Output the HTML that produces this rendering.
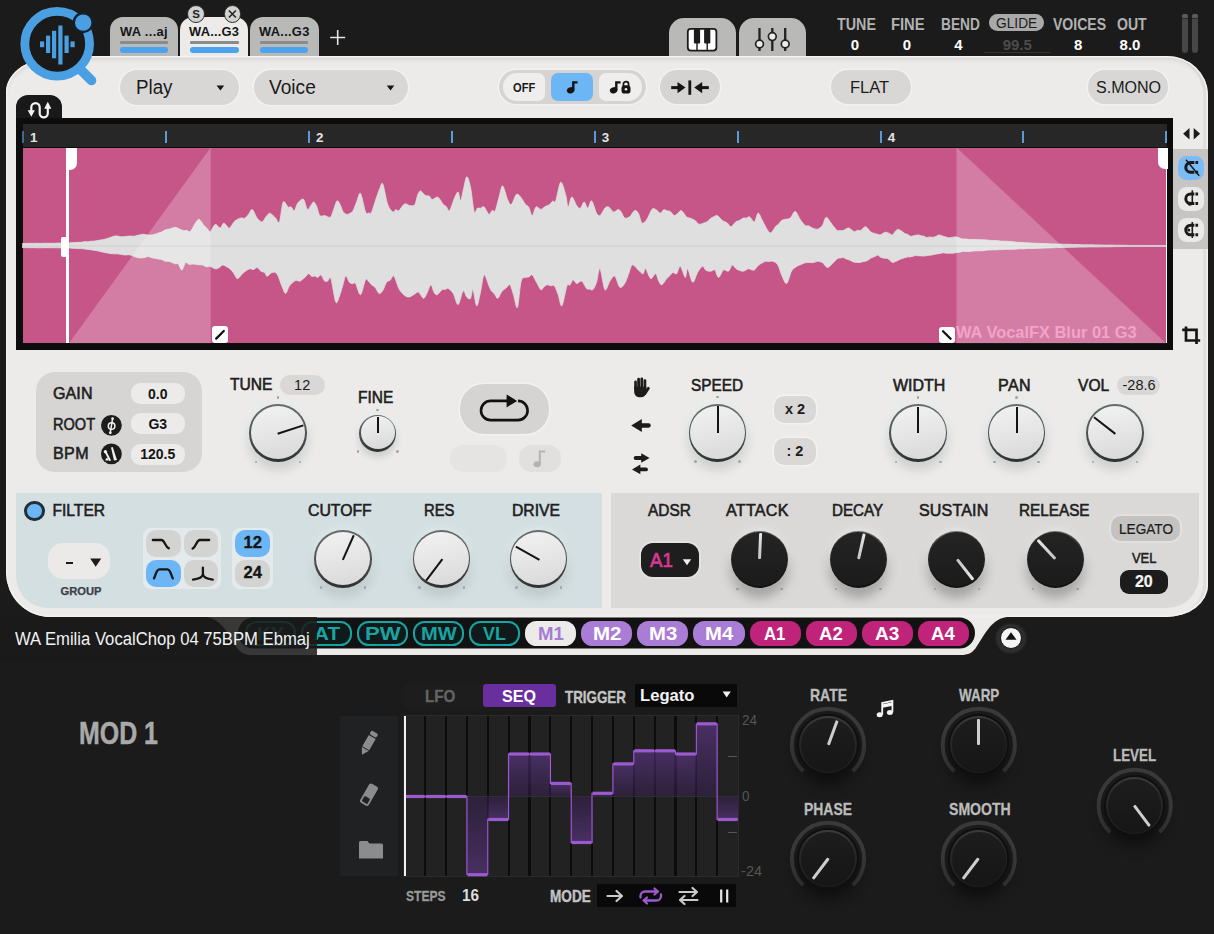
<!DOCTYPE html>
<html><head><meta charset="utf-8"><title>Sampler</title>
<style>
html,body{margin:0;padding:0;}
body{width:1214px;height:934px;background:#1b1b1b;position:relative;overflow:hidden;font-family:"Liberation Sans",sans-serif;}
.t{position:absolute;white-space:nowrap;transform-origin:0 50%;display:block;}
.b{position:absolute;box-sizing:border-box;}
svg{position:absolute;overflow:visible;}
</style></head><body>
<div class="b" style="left:109.6px;top:17.0px;width:68.4px;height:41.0px;background:#b9b9b8;border-radius:0px;border-radius:13px 13px 0 0;"></div>
<span class="t" style="left:120.3px;top:25.8px;font-size:12.5px;line-height:12.5px;font-weight:700;color:#161616;transform:scaleX(1.030);letter-spacing:0.33px;">WA ...aj</span>
<div class="b" style="left:120.3px;top:41.2px;width:48.2px;height:2.6px;background:#8b8b8b;border-radius:1px;"></div>
<div class="b" style="left:120.3px;top:46.7px;width:48.2px;height:6.8px;background:#4aa3ec;border-radius:3.4px;"></div>
<div class="b" style="left:180.0px;top:17.0px;width:67.8px;height:41.0px;background:#ecebe9;border-radius:0px;border-radius:13px 13px 0 0;"></div>
<span class="t" style="left:188.9px;top:25.8px;font-size:12.5px;line-height:12.5px;font-weight:700;color:#161616;transform:scaleX(1.030);letter-spacing:0.20px;">WA...G3</span>
<div class="b" style="left:190.0px;top:41.2px;width:48.5px;height:2.6px;background:#8b8b8b;border-radius:1px;"></div>
<div class="b" style="left:190.0px;top:46.7px;width:48.5px;height:6.8px;background:#4aa3ec;border-radius:3.4px;"></div>
<div class="b" style="left:250.0px;top:17.0px;width:68.5px;height:41.0px;background:#b9b9b8;border-radius:0px;border-radius:13px 13px 0 0;"></div>
<span class="t" style="left:258.5px;top:25.8px;font-size:12.5px;line-height:12.5px;font-weight:700;color:#161616;transform:scaleX(1.030);letter-spacing:0.27px;">WA...G3</span>
<div class="b" style="left:259.5px;top:41.2px;width:48.5px;height:2.6px;background:#8b8b8b;border-radius:1px;"></div>
<div class="b" style="left:259.5px;top:46.7px;width:48.5px;height:6.8px;background:#4aa3ec;border-radius:3.4px;"></div>
<div class="b" style="left:187.2px;top:5.2px;width:17.6px;height:17.6px;background:#d2d2d1;border-radius:9px;border:1.3px solid #2a2a2a;"></div>
<div class="b" style="left:223.6px;top:5.2px;width:17.6px;height:17.6px;background:#d2d2d1;border-radius:9px;border:1.3px solid #2a2a2a;"></div>
<span class="t" style="left:192.2px;top:8.6px;font-size:11.5px;line-height:11.5px;font-weight:700;color:#222;transform:scaleX(1.000);">S</span>
<svg style="left:0;top:0" width="400" height="60"><path d="M228.9 10.5l7 7m0-7l-7 7" stroke="#222" stroke-width="1.5" fill="none"/><path d="M330.2 37.5h15M337.7 30v15" stroke="#e4e4e4" stroke-width="1.6" fill="none"/></svg>
<div class="b" style="left:669.3px;top:17.8px;width:67.2px;height:40.2px;background:#b9b9b8;border-radius:0px;border-radius:15px 15px 0 0;"></div>
<div class="b" style="left:739.0px;top:17.8px;width:67.0px;height:40.2px;background:#b9b9b8;border-radius:0px;border-radius:15px 15px 0 0;"></div>
<svg style="left:0;top:0" width="1214" height="60"><rect x="687.8" y="28.8" width="28.6" height="21.8" rx="3" fill="#fff" stroke="#1c1c1c" stroke-width="1.8"/><path d="M697 43v7M707.2 43v7" stroke="#1c1c1c" stroke-width="1.4"/><rect x="693.9" y="29" width="6.2" height="14.4" rx="1" fill="#1c1c1c"/><rect x="704.1" y="29" width="6.2" height="14.4" rx="1" fill="#1c1c1c"/><path d="M759.5 28v23M772.3 28v23M785.2 28v23" stroke="#222" stroke-width="2.3"/><circle cx="759.5" cy="44" r="3.9" fill="#ececec" stroke="#222" stroke-width="1.7"/><circle cx="772.3" cy="36.6" r="3.9" fill="#ececec" stroke="#222" stroke-width="1.7"/><circle cx="785.2" cy="44" r="3.9" fill="#ececec" stroke="#222" stroke-width="1.7"/></svg>
<span class="t" style="left:837.0px;top:16.6px;font-size:15.6px;line-height:15.6px;font-weight:700;color:#b2b2b2;transform:scaleX(0.918);">TUNE</span>
<span class="t" style="left:891.4px;top:16.6px;font-size:15.6px;line-height:15.6px;font-weight:700;color:#b2b2b2;transform:scaleX(0.946);">FINE</span>
<span class="t" style="left:940.7px;top:16.6px;font-size:15.6px;line-height:15.6px;font-weight:700;color:#b2b2b2;transform:scaleX(0.878);">BEND</span>
<div class="b" style="left:989.4px;top:14.3px;width:54.8px;height:16.6px;background:#a9a9a9;border-radius:8.3px;"></div>
<span class="t" style="left:995.5px;top:14.7px;font-size:15.4px;line-height:15.4px;font-weight:400;color:#1d1d1d;transform:scaleX(0.894);">GLIDE</span>
<span class="t" style="left:1053.1px;top:16.6px;font-size:15.6px;line-height:15.6px;font-weight:700;color:#b2b2b2;transform:scaleX(0.901);">VOICES</span>
<span class="t" style="left:1116.6px;top:16.6px;font-size:15.6px;line-height:15.6px;font-weight:700;color:#b2b2b2;transform:scaleX(0.902);">OUT</span>
<span class="t" style="left:850.8px;top:37.0px;font-size:15px;line-height:15px;font-weight:700;color:#fff;transform:scaleX(1.000);">0</span>
<span class="t" style="left:902.8px;top:37.0px;font-size:15px;line-height:15px;font-weight:700;color:#fff;transform:scaleX(1.000);">0</span>
<span class="t" style="left:954.3px;top:37.0px;font-size:15px;line-height:15px;font-weight:700;color:#fff;transform:scaleX(1.000);">4</span>
<span class="t" style="left:1002.7px;top:37.0px;font-size:15px;line-height:15px;font-weight:700;color:#4c4c4c;transform:scaleX(1.000);">99.5</span>
<span class="t" style="left:1074.1px;top:37.0px;font-size:15px;line-height:15px;font-weight:700;color:#fff;transform:scaleX(1.000);">8</span>
<span class="t" style="left:1119.6px;top:37.0px;font-size:15px;line-height:15px;font-weight:700;color:#fff;transform:scaleX(1.000);">8.0</span>
<div class="b" style="left:984.0px;top:52.0px;width:66.0px;height:1.3px;background:#333;border-radius:0px;"></div>
<div class="b" style="left:1181.6px;top:13.6px;width:6.2px;height:39.4px;background:#474747;border-radius:3px;"></div>
<div class="b" style="left:1181.6px;top:13.6px;width:6.2px;height:4.0px;background:#5c5c5c;border-radius:2px;"></div>
<div class="b" style="left:1181.6px;top:17.6px;width:6.2px;height:1.6px;background:#2a2a2a;border-radius:0px;"></div>
<div class="b" style="left:1192.0px;top:13.6px;width:6.2px;height:39.4px;background:#474747;border-radius:3px;"></div>
<div class="b" style="left:1192.0px;top:13.6px;width:6.2px;height:4.0px;background:#5c5c5c;border-radius:2px;"></div>
<div class="b" style="left:1192.0px;top:17.6px;width:6.2px;height:1.6px;background:#2a2a2a;border-radius:0px;"></div>
<div class="b" id="panel" style="left:6px;top:55.7px;width:1202px;height:561.3px;background:#ecebe9;border-radius:54px 41px 42px 44px / 36px 39px 32px 45px;overflow:hidden;box-shadow:inset 0 0 0 1.5px #f3f2f0,inset 0 5px 5px -2px rgba(60,50,40,0.13),inset -6px 0 0 -1px rgba(0,0,0,0.045);">
</div>
<svg style="left:0;top:0" width="130" height="100" viewBox="0 0 130 100">
<line x1="80" y1="69" x2="91.5" y2="80.5" stroke="#4a9fe3" stroke-width="9.6" stroke-linecap="round"/>
<circle cx="57.2" cy="43.8" r="32.4" fill="#1a1a1a" stroke="#4a9fe3" stroke-width="8.8"/>
<circle cx="83.2" cy="22.6" r="9.4" fill="#4a9fe3" stroke="#15202b" stroke-width="2.4"/>
<rect x="40.0" y="41.4" width="4.2" height="5.8" fill="#4a9fe3"/>
<rect x="46.0" y="35.6" width="4.2" height="17.4" fill="#4a9fe3"/>
<rect x="52.0" y="30.8" width="4.2" height="27.5" fill="#4a9fe3"/>
<rect x="58.3" y="25.5" width="4.2" height="39.0" fill="#4a9fe3"/>
<rect x="64.5" y="35.6" width="4.2" height="17.4" fill="#4a9fe3"/>
<rect x="70.5" y="41.4" width="4.2" height="5.8" fill="#4a9fe3"/>
</svg>
<div class="b" style="left:119.6px;top:70.4px;width:119.0px;height:34.5px;background:#d8d7d6;border-radius:17.3px;box-shadow:0 0 0 1.5px rgba(255,255,255,0.38);"></div>
<span class="t" style="left:135.8px;top:77.7px;font-size:19.5px;line-height:19.5px;font-weight:400;color:#1b1b1b;transform:scaleX(0.962);">Play</span>
<div class="b" style="left:253.5px;top:70.4px;width:154.5px;height:34.5px;background:#d8d7d6;border-radius:17.3px;box-shadow:0 0 0 1.5px rgba(255,255,255,0.38);"></div>
<span class="t" style="left:268.9px;top:77.7px;font-size:19.5px;line-height:19.5px;font-weight:400;color:#1b1b1b;transform:scaleX(0.981);">Voice</span>
<svg style="left:0;top:0" width="1214" height="130"><path d="M216.6 85.6h7.6l-3.8 5z M386.7 85.6h7.6l-3.8 5z" fill="#151515"/></svg>
<div class="b" style="left:499.0px;top:70.2px;width:146.6px;height:34.1px;background:#d5d4d3;border-radius:17px;box-shadow:0 0 0 1.5px rgba(255,255,255,0.38);"></div>
<div class="b" style="left:502.5px;top:73.4px;width:42.9px;height:27.8px;background:#efeeec;border-radius:0px;border-radius:14px 7px 7px 14px;"></div>
<div class="b" style="left:551.0px;top:73.4px;width:42.2px;height:27.8px;background:#6cb6f5;border-radius:7px;"></div>
<div class="b" style="left:599.0px;top:73.4px;width:43.2px;height:27.8px;background:#efeeec;border-radius:0px;border-radius:7px 14px 14px 7px;"></div>
<span class="t" style="left:513.0px;top:81.6px;font-size:12px;line-height:12px;font-weight:700;color:#1b1b1b;transform:scaleX(0.929);">OFF</span>
<svg style="left:0;top:0" width="1214" height="130"><ellipse cx="570.600" cy="90.300" rx="3.800" ry="3.100" fill="#151515" transform="rotate(-20 570.600 90.300)"/><path d="M573.300 90.300V82.400h4.300" stroke="#151515" stroke-width="2.400" fill="none"/><ellipse cx="613.600" cy="90.300" rx="3.800" ry="3.100" fill="#151515" transform="rotate(-20 613.600 90.300)"/><path d="M616.300 90.300V82.400h4.300" stroke="#151515" stroke-width="2.400" fill="none"/><rect x="621.500" y="85.300" width="9" height="8.300" rx="3.200" fill="#151515"/><path d="M623.400 86v-1.700a2.600 2.600 0 0 1 5.200 0v1.700" stroke="#151515" stroke-width="1.700" fill="none"/><circle cx="626" cy="89.300" r="1.300" fill="#efeeec"/></svg>
<div class="b" style="left:660.0px;top:70.2px;width:59.5px;height:34.1px;background:#d5d4d3;border-radius:17px;box-shadow:0 0 0 1.5px rgba(255,255,255,0.38);"></div>
<svg style="left:0;top:0" width="1214" height="130"><path d="M671.2 87.6h8" stroke="#151515" stroke-width="3"/><path d="M677.5 82l8 5.600-8 5.600z" fill="#151515"/><path d="M689.8 80.400v14.400" stroke="#151515" stroke-width="2.800"/><path d="M708.800 87.600h-8" stroke="#151515" stroke-width="3"/><path d="M702.200 82l-8 5.600 8 5.600z" fill="#151515"/></svg>
<div class="b" style="left:830.5px;top:70.2px;width:80.5px;height:34.1px;background:#d8d7d6;border-radius:17px;box-shadow:0 0 0 1.5px rgba(255,255,255,0.38);"></div>
<span class="t" style="left:850.2px;top:80.0px;font-size:16px;line-height:16px;font-weight:400;color:#1b1b1b;transform:scaleX(1.028);">FLAT</span>
<div class="b" style="left:1088.4px;top:70.2px;width:79.6px;height:33.4px;background:#d8d7d6;border-radius:16.7px;box-shadow:0 0 0 1.5px rgba(255,255,255,0.38);"></div>
<span class="t" style="left:1095.5px;top:80.0px;font-size:16px;line-height:16px;font-weight:400;color:#1b1b1b;transform:scaleX(1.003);">S.MONO</span>
<div class="b" style="left:16.4px;top:94.9px;width:46.0px;height:30.1px;background:#191919;border-radius:0px;border-radius:12px 12px 0 0;"></div>
<div class="b" style="left:16.0px;top:117.5px;width:1157.0px;height:232.0px;background:#0d0d0d;border-radius:0px;"></div>
<div class="b" style="left:22.6px;top:124.3px;width:1144.8px;height:23.2px;background:#272727;border-radius:0px;"></div>
<div class="b" style="left:22.6px;top:147.5px;width:1144.9px;height:195.8px;background:#c75688;border-radius:0px;"></div>
<svg style="left:0;top:0" width="100" height="130"><path d="M31.300 111V107.300a4.200 4.200 0 0 1 8.400 0V113.300a4.050 4.050 0 0 0 8.100 0V108" stroke="#f4f4f4" stroke-width="2.200" fill="none"/><path d="M27.700 110.300h7.200l-3.600 6.500z M44.200 108.800h7.200l-3.600-7z" fill="#f4f4f4"/></svg>
<div class="b" style="left:21.8px;top:131.0px;width:2.0px;height:11.8px;background:#3f6a94;border-radius:0px;"></div>
<span class="t" style="left:30.0px;top:131.6px;font-size:13.4px;line-height:12px;font-weight:700;color:#e4e4e4;">1</span>
<div class="b" style="left:164.8px;top:131.0px;width:2.0px;height:11.8px;background:#5b9bd5;border-radius:0px;"></div>
<div class="b" style="left:307.7px;top:131.0px;width:2.0px;height:11.8px;background:#5b9bd5;border-radius:0px;"></div>
<span class="t" style="left:315.9px;top:131.6px;font-size:13.4px;line-height:12px;font-weight:700;color:#e4e4e4;">2</span>
<div class="b" style="left:450.6px;top:131.0px;width:2.0px;height:11.8px;background:#5b9bd5;border-radius:0px;"></div>
<div class="b" style="left:593.6px;top:131.0px;width:2.0px;height:11.8px;background:#5b9bd5;border-radius:0px;"></div>
<span class="t" style="left:601.8px;top:131.6px;font-size:13.4px;line-height:12px;font-weight:700;color:#e4e4e4;">3</span>
<div class="b" style="left:736.5px;top:131.0px;width:2.0px;height:11.8px;background:#5b9bd5;border-radius:0px;"></div>
<div class="b" style="left:879.5px;top:131.0px;width:2.0px;height:11.8px;background:#5b9bd5;border-radius:0px;"></div>
<span class="t" style="left:887.7px;top:131.6px;font-size:13.4px;line-height:12px;font-weight:700;color:#e4e4e4;">4</span>
<div class="b" style="left:1022.4px;top:131.0px;width:2.0px;height:11.8px;background:#5b9bd5;border-radius:0px;"></div>
<div class="b" style="left:1165.4px;top:131.0px;width:1.3px;height:11.8px;background:#5b9bd5;border-radius:0px;"></div>
<svg style="left:0;top:0" width="1214" height="360"><path d="M22.6 244.1C22.6 244.0 22.1 243.5 22.5 243.4C22.9 243.3 24.3 243.4 25.1 243.4C25.9 243.4 26.9 243.4 27.7 243.4C28.5 243.4 29.5 243.3 30.3 243.3C31.2 243.3 32.1 243.4 32.9 243.4C33.8 243.4 34.7 243.3 35.6 243.3C36.4 243.2 37.3 243.3 38.2 243.3C39.0 243.3 39.9 243.4 40.8 243.4C41.6 243.4 42.6 243.2 43.4 243.2C44.2 243.2 45.2 243.3 46.0 243.3C46.9 243.3 47.8 243.2 48.6 243.2C49.5 243.2 50.4 243.3 51.3 243.3C52.1 243.3 53.0 243.3 53.9 243.3C54.7 243.3 55.6 243.2 56.5 243.2C57.3 243.1 58.3 243.0 59.1 243.0C59.9 243.1 60.9 243.2 61.7 243.2C62.6 243.3 63.5 243.2 64.3 243.2C65.2 243.2 66.1 243.2 66.9 243.1C67.8 243.1 69.0 243.0 69.9 242.9C70.9 242.8 71.9 242.6 72.9 242.6C73.8 242.5 74.9 242.5 75.8 242.5C76.8 242.4 77.9 242.4 78.8 242.3C79.8 242.3 80.8 242.3 81.8 242.2C82.7 242.0 83.9 241.7 84.9 241.6C85.9 241.6 87.0 241.9 88.0 241.8C88.9 241.7 90.1 241.3 91.0 241.2C92.0 241.1 93.1 241.3 94.1 241.2C95.1 241.1 96.2 240.8 97.2 240.6C98.2 240.4 99.3 240.2 100.3 240.1C101.3 239.9 102.4 239.7 103.4 239.5C104.4 239.2 105.4 239.0 106.5 238.7C107.6 238.4 109.0 237.9 110.2 237.5C111.4 237.1 112.8 236.5 113.9 236.2C115.0 236.0 116.1 235.9 117.2 235.9C118.2 236.0 119.4 236.6 120.5 236.7C121.5 236.8 122.7 236.8 123.8 236.7C124.8 236.7 126.0 236.4 127.1 236.3C128.1 236.2 129.3 236.1 130.4 236.1C131.4 236.1 132.6 236.3 133.7 236.2C134.7 236.1 135.9 235.8 137.0 235.5C138.0 235.3 139.2 234.9 140.3 234.7C141.3 234.5 142.4 234.2 143.5 234.2C144.7 234.3 146.1 234.8 147.3 234.9C148.4 235.1 149.8 235.1 151.0 235.0C152.1 234.9 153.5 234.7 154.7 234.3C155.9 234.0 157.3 233.4 158.4 233.0C159.5 232.6 160.6 232.5 161.7 232.0C162.7 231.5 163.9 230.5 165.0 230.0C166.0 229.6 167.1 229.6 168.3 229.3C169.4 229.0 170.8 228.5 172.0 228.2C173.2 227.9 174.5 227.2 175.7 227.3C176.9 227.5 178.2 228.5 179.4 229.0C180.6 229.5 181.9 230.3 183.1 230.5C184.3 230.8 185.6 230.4 186.8 230.6C188.0 230.7 189.1 232.5 190.5 231.3C191.9 230.1 194.1 225.0 195.4 223.1C196.8 221.2 197.8 219.0 199.1 219.4C200.5 219.8 202.8 224.1 204.1 225.6C205.4 227.1 206.2 227.5 207.2 228.5C208.2 229.5 209.0 232.4 210.3 231.8C211.5 231.1 213.6 225.0 215.2 224.4C216.8 223.8 218.8 228.3 220.1 228.1C221.5 227.9 222.5 223.1 223.9 223.1C225.2 223.1 227.5 227.7 228.8 228.1C230.0 228.4 230.8 226.4 231.7 225.3C232.6 224.2 233.6 222.2 234.6 221.2C235.5 220.3 236.4 220.0 237.4 219.4C238.5 218.9 240.0 218.1 241.2 217.9C242.3 217.7 243.7 218.8 244.9 218.2C246.0 217.6 247.4 215.6 248.6 214.2C249.8 212.8 250.9 208.9 252.3 209.5C253.7 210.2 255.6 216.2 257.2 218.2C258.8 220.2 260.8 222.1 262.2 221.9C263.5 221.7 264.7 218.3 265.9 216.9C267.0 215.5 268.5 213.5 269.6 213.2C270.7 213.0 271.7 214.4 272.7 215.2C273.6 216.0 274.7 217.1 275.7 218.2C276.8 219.3 278.3 224.5 279.5 221.9C280.6 219.3 281.8 204.5 283.2 202.1C284.5 199.8 286.8 206.3 288.1 207.1C289.4 207.8 290.2 206.4 291.2 207.0C292.2 207.6 293.3 211.2 294.3 210.8C295.2 210.3 296.2 205.8 297.1 204.2C298.1 202.6 298.9 201.5 300.0 200.8C301.1 200.0 302.5 198.2 303.7 199.5C304.9 200.9 306.3 208.4 307.4 209.4C308.5 210.4 309.5 207.1 310.5 206.0C311.5 204.8 312.6 201.9 313.6 202.0C314.6 202.1 315.7 204.3 316.7 206.5C317.7 208.6 318.5 214.1 319.8 215.6C321.1 217.1 323.4 215.4 324.7 215.6C326.0 215.8 326.8 216.7 327.8 216.9C328.8 217.1 329.9 218.2 330.9 216.8C331.9 215.5 333.0 211.1 334.0 208.5C335.0 206.0 336.1 201.4 337.1 200.8C338.1 200.2 339.2 202.9 340.2 204.7C341.1 206.5 342.2 210.3 343.2 211.9C344.3 213.4 345.9 214.2 346.9 214.4C348.0 214.6 349.0 213.8 350.0 213.2C351.0 212.6 352.0 212.5 353.1 210.7C354.2 208.8 355.6 204.2 356.8 201.4C358.0 198.6 359.2 191.7 360.5 193.4C361.9 195.0 364.2 208.8 365.5 211.9C366.8 215.0 367.6 213.0 368.6 213.0C369.6 213.0 370.4 214.4 371.7 211.9C372.9 209.3 375.3 200.8 376.6 197.1C377.9 193.4 378.7 190.8 379.7 188.8C380.7 186.7 381.5 181.5 382.8 184.0C384.1 186.5 386.1 200.0 387.7 204.5C389.3 208.9 391.4 211.0 392.7 211.9C393.9 212.7 394.8 210.0 395.7 209.8C396.7 209.6 397.6 211.5 398.8 210.7C400.1 209.8 402.5 205.5 403.8 204.5C405.1 203.4 405.9 204.0 406.9 204.2C407.9 204.4 408.7 205.7 410.0 205.7C411.2 205.8 413.7 206.2 414.9 204.5C416.1 202.8 416.7 197.3 417.6 195.1C418.5 193.0 419.4 191.1 420.3 190.9C421.2 190.6 422.3 192.8 423.2 193.5C424.1 194.3 425.1 195.4 426.0 195.8C427.0 196.2 428.1 195.4 429.1 196.0C430.1 196.6 430.9 199.4 432.2 199.5C433.5 199.7 435.9 197.0 437.1 197.1C438.4 197.1 439.2 198.5 440.2 199.7C441.2 200.9 442.3 203.4 443.3 204.5C444.3 205.6 445.4 205.7 446.4 206.7C447.4 207.7 448.2 212.0 449.5 210.7C450.8 209.3 453.1 201.3 454.4 198.3C455.8 195.3 457.2 191.7 458.1 192.1C459.1 192.5 459.7 201.4 460.6 200.8C461.5 200.1 462.7 192.0 463.7 188.2C464.7 184.3 465.7 177.0 466.8 176.8C467.9 176.6 469.3 181.6 470.5 187.2C471.7 192.8 473.1 208.5 474.2 211.9C475.3 215.3 476.3 208.9 477.3 208.3C478.3 207.7 479.3 208.4 480.4 208.2C481.5 208.0 482.7 206.0 484.1 206.9C485.5 207.9 487.7 213.8 489.0 214.4C490.3 214.9 491.1 211.1 492.1 210.5C493.1 209.9 494.1 212.7 495.2 210.7C496.3 208.6 497.7 201.7 498.9 197.7C500.1 193.8 501.2 185.7 502.6 185.9C504.0 186.2 506.2 196.6 507.6 199.5C508.9 202.5 509.9 205.3 511.3 204.5C512.7 203.7 514.9 196.0 516.2 194.6C517.5 193.2 518.3 194.7 519.3 195.5C520.3 196.3 521.4 198.1 522.4 199.5C523.4 201.0 524.5 203.3 525.5 204.5C526.5 205.7 527.5 205.2 528.6 206.9C529.7 208.7 531.1 215.6 532.3 215.6C533.5 215.6 534.6 207.9 536.0 206.9C537.4 206.0 539.5 209.4 540.9 209.4C542.3 209.4 543.2 207.7 544.6 206.9C546.0 206.2 548.3 205.4 549.6 204.5C550.9 203.5 551.7 201.7 552.7 201.1C553.6 200.5 554.5 203.8 555.7 200.8C557.0 197.8 559.1 183.2 560.7 182.2C562.3 181.3 564.4 190.6 565.6 194.6C566.8 198.5 567.1 206.6 568.1 206.9C569.1 207.3 570.4 197.3 571.8 197.1C573.2 196.9 575.4 203.9 576.7 205.7C578.1 207.5 579.3 208.8 580.5 208.2C581.6 207.6 583.0 202.0 584.2 202.0C585.3 202.0 586.7 208.4 587.9 208.2C589.1 208.0 590.2 200.0 591.6 200.8C593.0 201.6 595.2 210.8 596.5 213.1C597.9 215.5 598.7 216.4 600.0 215.6C601.3 214.8 603.6 209.6 604.9 208.2C606.3 206.8 607.3 206.4 608.6 206.9C610.0 207.5 612.0 211.5 613.6 211.9C615.2 212.3 617.2 209.3 618.5 209.4C619.8 209.6 620.6 211.4 621.6 212.8C622.6 214.2 623.4 217.4 624.7 218.1C626.0 218.7 628.1 218.0 629.7 216.8C631.2 215.6 633.2 211.2 634.6 210.7C636.0 210.1 637.1 211.1 638.3 213.1C639.5 215.1 640.6 222.0 642.0 223.0C643.4 224.0 645.4 221.5 646.9 219.3C648.5 217.1 650.5 211.0 651.9 209.4C653.3 207.8 654.2 208.8 655.6 209.4C657.0 210.0 659.3 213.1 660.5 213.1C661.8 213.2 662.6 210.1 663.6 209.7C664.6 209.3 665.6 210.4 666.7 210.7C667.8 211.0 669.2 210.8 670.4 211.6C671.6 212.4 672.9 215.3 674.1 215.6C675.3 215.9 676.6 214.1 677.8 213.3C679.0 212.6 680.2 210.1 681.5 210.7C682.9 211.2 685.2 215.7 686.5 216.8C687.8 218.0 688.6 217.6 689.6 218.0C690.6 218.4 691.7 218.8 692.7 219.3C693.6 219.8 694.8 220.2 695.7 221.0C696.7 221.8 697.6 223.9 698.8 224.2C700.1 224.6 702.4 223.5 703.8 223.0C705.2 222.5 706.3 222.2 707.5 221.4C708.7 220.6 710.1 218.8 711.2 218.1C712.3 217.3 713.3 216.9 714.3 216.5C715.3 216.1 716.1 215.0 717.4 215.6C718.7 216.2 720.7 219.4 722.3 220.5C723.9 221.7 725.9 222.0 727.3 223.0C728.6 224.0 729.6 226.9 731.0 226.7C732.3 226.5 734.5 222.8 735.9 221.8C737.3 220.8 738.4 221.0 739.6 220.4C740.8 219.8 742.2 218.4 743.3 218.1C744.4 217.7 745.4 218.3 746.4 218.1C747.4 217.9 748.2 216.2 749.5 216.8C750.8 217.4 753.1 222.4 754.4 221.8C755.8 221.2 757.0 213.5 758.1 213.1C759.3 212.7 760.7 217.1 761.8 219.3C763.0 221.5 764.2 224.5 765.6 226.7C766.9 228.9 768.9 232.9 770.5 232.9C772.1 232.9 774.2 228.1 775.4 226.7C776.7 225.3 777.5 225.3 778.5 224.3C779.5 223.3 780.5 221.3 781.6 220.5C782.7 219.7 783.9 219.7 785.3 219.3C786.7 218.9 788.7 219.3 790.3 218.1C791.8 216.8 793.6 211.2 795.2 211.4C796.8 211.6 798.6 217.0 800.1 219.3C801.7 221.6 803.7 224.4 805.1 225.5C806.5 226.5 807.6 225.5 808.8 225.9C810.0 226.3 811.1 227.4 812.5 228.0C813.9 228.5 815.9 229.6 817.4 229.2C819.0 228.8 821.0 227.4 822.4 225.5C823.8 223.6 824.7 217.7 826.1 217.3C827.5 216.9 829.8 221.4 831.0 223.0C832.3 224.6 833.1 226.0 834.1 227.1C835.1 228.3 836.2 229.9 837.2 230.4C838.2 231.0 839.3 230.6 840.3 230.6C841.3 230.6 842.1 230.8 843.4 230.4C844.7 230.0 847.0 228.1 848.3 228.0C849.6 227.8 850.4 229.1 851.4 229.7C852.4 230.3 853.5 231.6 854.5 231.7C855.5 231.7 856.6 230.5 857.6 230.3C858.6 230.1 859.4 231.0 860.7 230.4C862.0 229.9 864.0 226.5 865.6 226.7C867.2 226.9 869.3 230.6 870.6 231.7C871.9 232.7 872.7 232.9 873.7 233.2C874.6 233.6 875.7 233.9 876.7 234.1C877.8 234.4 879.0 235.0 880.0 234.9C881.0 234.8 881.9 233.9 882.8 233.4C883.6 233.0 884.5 232.2 885.5 232.2C886.5 232.1 887.8 232.8 888.9 233.3C890.0 233.7 891.4 235.2 892.4 234.9C893.4 234.6 894.3 232.3 895.1 231.4C896.0 230.5 896.9 229.5 897.9 229.4C898.9 229.3 900.2 230.1 901.3 230.8C902.4 231.5 903.8 233.0 904.8 233.5C905.7 234.1 906.6 233.9 907.5 234.3C908.4 234.8 909.4 236.0 910.3 236.3C911.1 236.5 912.1 236.1 913.0 235.9C913.9 235.7 914.9 235.5 915.8 235.3C916.6 235.1 917.6 234.8 918.5 234.9C919.4 235.0 920.4 235.6 921.3 235.8C922.1 236.0 923.1 236.0 924.0 236.3C924.9 236.5 925.9 237.6 926.8 237.7C927.6 237.8 928.6 236.9 929.5 236.9C930.4 236.8 931.4 237.3 932.3 237.3C933.1 237.3 933.9 237.2 935.0 236.8C936.1 236.5 938.0 235.0 939.1 234.9C940.3 234.8 941.3 235.7 942.4 236.0C943.4 236.3 944.5 236.6 945.6 236.9C946.6 237.1 947.7 237.6 948.8 237.7C949.8 237.7 951.1 237.5 952.2 237.4C953.3 237.2 954.6 236.8 955.7 236.8C956.8 236.9 958.0 237.5 959.1 237.8C960.2 238.2 961.5 238.9 962.5 239.0C963.5 239.2 964.4 238.9 965.3 239.0C966.2 239.0 967.2 239.2 968.0 239.3C968.9 239.4 969.9 239.6 970.8 239.6C971.7 239.6 972.7 239.4 973.5 239.4C974.4 239.4 975.4 239.5 976.3 239.6C977.2 239.6 978.2 239.7 979.0 239.7C979.9 239.8 980.9 239.8 981.8 239.8C982.7 239.8 983.7 239.7 984.5 239.7C985.4 239.8 986.4 239.9 987.3 240.1C988.2 240.2 989.2 240.3 990.0 240.4C990.9 240.5 991.9 240.5 992.8 240.5C993.7 240.5 994.7 240.6 995.5 240.6C996.4 240.6 997.4 240.6 998.3 240.7C999.2 240.8 1000.2 241.1 1001.0 241.2C1001.9 241.3 1002.9 241.2 1003.8 241.2C1004.7 241.2 1005.7 241.2 1006.5 241.2C1007.4 241.2 1008.4 241.4 1009.3 241.5C1010.2 241.6 1011.2 241.6 1012.0 241.7C1012.9 241.8 1013.9 241.8 1014.8 241.9C1015.7 242.0 1016.7 242.3 1017.6 242.3C1018.4 242.4 1019.4 242.4 1020.3 242.5C1021.2 242.5 1022.2 242.5 1023.1 242.6C1023.9 242.7 1024.9 242.8 1025.8 242.8C1026.7 242.9 1027.7 242.8 1028.6 242.8C1029.4 242.8 1030.4 243.1 1031.3 243.1C1032.2 243.2 1033.2 243.1 1034.1 243.2C1034.9 243.2 1035.9 243.3 1036.8 243.3C1037.7 243.4 1038.7 243.4 1039.6 243.4C1040.4 243.4 1041.4 243.5 1042.3 243.5C1043.2 243.5 1044.2 243.5 1045.1 243.6C1045.9 243.6 1046.9 243.7 1047.8 243.7C1048.7 243.8 1049.7 243.8 1050.6 243.9C1051.4 243.9 1052.4 243.9 1053.3 243.9C1054.2 243.9 1055.2 244.0 1056.1 244.0C1056.9 244.0 1057.9 244.1 1058.8 244.1C1059.7 244.1 1060.7 244.1 1061.6 244.1C1062.4 244.2 1063.4 244.3 1064.3 244.3C1065.2 244.3 1066.2 244.2 1067.1 244.2C1068.0 244.2 1068.9 244.3 1069.8 244.3C1070.7 244.4 1071.7 244.4 1072.6 244.5C1073.5 244.5 1074.4 244.5 1075.3 244.5C1076.2 244.5 1077.2 244.6 1078.1 244.6C1079.0 244.6 1079.9 244.6 1080.8 244.7C1081.7 244.7 1082.7 244.7 1083.6 244.8C1084.5 244.8 1085.4 244.8 1086.3 244.8C1087.2 244.8 1088.2 244.8 1089.1 244.8C1090.0 244.8 1090.9 244.8 1091.8 244.8C1092.7 244.8 1093.7 244.9 1094.6 244.9C1095.5 244.9 1096.5 244.9 1097.3 244.9C1098.2 245.0 1099.2 245.0 1100.1 245.0C1101.0 245.0 1102.0 245.1 1102.8 245.1C1103.7 245.1 1104.7 245.1 1105.6 245.1C1106.5 245.1 1107.5 245.1 1108.3 245.1C1109.2 245.1 1110.2 245.1 1111.1 245.1C1112.0 245.1 1113.0 245.2 1113.8 245.2C1114.7 245.2 1115.7 245.2 1116.6 245.2C1117.5 245.2 1118.5 245.2 1119.3 245.2C1120.2 245.2 1121.2 245.3 1122.1 245.3C1123.0 245.3 1124.0 245.3 1124.8 245.3C1125.7 245.4 1126.7 245.4 1127.6 245.4C1128.5 245.4 1129.5 245.4 1130.3 245.4C1131.2 245.4 1132.2 245.4 1133.1 245.4C1134.0 245.4 1135.0 245.4 1135.8 245.4C1136.7 245.4 1137.7 245.4 1138.6 245.4C1139.5 245.4 1140.5 245.4 1141.3 245.4C1142.2 245.4 1143.2 245.5 1144.1 245.5C1145.0 245.5 1146.0 245.5 1146.9 245.5C1147.7 245.5 1148.7 245.5 1149.6 245.5C1150.5 245.5 1151.5 245.5 1152.4 245.5C1153.2 245.6 1154.2 245.5 1155.1 245.5C1156.0 245.5 1157.0 245.6 1157.9 245.6C1158.7 245.6 1159.7 245.6 1160.6 245.6C1161.5 245.6 1162.5 245.6 1163.4 245.6C1164.2 245.6 1165.7 245.6 1166.1 245.6L1166.1 246.2C1165.7 246.2 1164.2 246.2 1163.4 246.2C1162.5 246.2 1161.5 246.2 1160.6 246.2C1159.7 246.2 1158.7 246.3 1157.9 246.3C1157.0 246.3 1156.0 246.3 1155.1 246.3C1154.2 246.3 1153.2 246.3 1152.4 246.3C1151.5 246.3 1150.5 246.3 1149.6 246.3C1148.7 246.3 1147.7 246.3 1146.9 246.3C1146.0 246.3 1145.0 246.4 1144.1 246.4C1143.2 246.4 1142.2 246.4 1141.3 246.4C1140.5 246.4 1139.5 246.4 1138.6 246.4C1137.7 246.4 1136.7 246.4 1135.8 246.4C1135.0 246.4 1134.0 246.4 1133.1 246.4C1132.2 246.5 1131.2 246.4 1130.3 246.4C1129.5 246.5 1128.5 246.5 1127.6 246.5C1126.7 246.5 1125.7 246.5 1124.8 246.5C1124.0 246.5 1123.0 246.5 1122.1 246.5C1121.2 246.6 1120.2 246.6 1119.3 246.6C1118.5 246.6 1117.5 246.6 1116.6 246.6C1115.7 246.6 1114.7 246.6 1113.8 246.6C1113.0 246.7 1112.0 246.6 1111.1 246.7C1110.2 246.7 1109.2 246.7 1108.3 246.8C1107.5 246.8 1106.5 246.8 1105.6 246.8C1104.7 246.8 1103.7 246.8 1102.8 246.8C1102.0 246.8 1101.0 246.8 1100.1 246.8C1099.2 246.8 1098.2 246.9 1097.3 246.9C1096.5 246.9 1095.5 246.9 1094.6 246.9C1093.7 246.9 1092.7 246.9 1091.8 246.9C1090.9 246.9 1090.0 246.9 1089.1 246.9C1088.2 247.0 1087.2 247.0 1086.3 247.0C1085.4 247.0 1084.5 247.1 1083.6 247.1C1082.7 247.1 1081.7 247.1 1080.8 247.1C1079.9 247.1 1079.0 247.1 1078.1 247.1C1077.2 247.1 1076.2 247.2 1075.3 247.3C1074.4 247.3 1073.5 247.3 1072.6 247.3C1071.7 247.3 1070.7 247.3 1069.8 247.3C1068.9 247.3 1068.0 247.3 1067.1 247.4C1066.2 247.4 1065.2 247.4 1064.3 247.4C1063.4 247.5 1062.4 247.5 1061.6 247.5C1060.7 247.5 1059.7 247.5 1058.8 247.5C1057.9 247.5 1056.9 247.5 1056.1 247.6C1055.2 247.6 1054.2 247.7 1053.3 247.7C1052.4 247.8 1051.4 247.9 1050.6 247.9C1049.7 247.9 1048.7 247.9 1047.8 247.9C1046.9 247.9 1045.9 247.9 1045.1 248.0C1044.2 248.0 1043.2 248.2 1042.3 248.2C1041.4 248.2 1040.4 248.1 1039.6 248.2C1038.7 248.2 1037.7 248.4 1036.8 248.4C1035.9 248.5 1034.9 248.4 1034.1 248.4C1033.2 248.4 1032.2 248.6 1031.3 248.6C1030.4 248.6 1029.4 248.5 1028.6 248.5C1027.7 248.5 1026.7 248.7 1025.8 248.7C1024.9 248.8 1023.9 248.9 1023.1 248.9C1022.2 248.9 1021.2 248.8 1020.3 248.8C1019.4 248.8 1018.4 248.9 1017.6 248.9C1016.7 249.0 1015.7 249.2 1014.8 249.2C1013.9 249.3 1012.9 249.3 1012.0 249.3C1011.2 249.3 1010.2 249.4 1009.3 249.4C1008.4 249.4 1007.4 249.3 1006.5 249.3C1005.7 249.3 1004.7 249.4 1003.8 249.5C1002.9 249.5 1001.9 249.5 1001.0 249.6C1000.2 249.6 999.2 249.6 998.3 249.6C997.4 249.7 996.4 249.8 995.5 249.9C994.7 249.9 993.7 249.8 992.8 249.8C991.9 249.9 990.9 250.0 990.0 250.0C989.2 250.1 988.2 250.0 987.3 250.1C986.4 250.2 985.4 250.5 984.5 250.6C983.7 250.7 982.7 250.8 981.8 250.8C980.9 250.8 979.9 250.8 979.0 250.8C978.2 250.8 977.2 250.8 976.3 250.9C975.4 250.9 974.4 250.8 973.5 250.9C972.7 251.0 971.7 251.3 970.8 251.4C969.9 251.5 968.9 251.5 968.0 251.5C967.2 251.5 966.2 251.5 965.3 251.5C964.4 251.5 963.4 251.3 962.5 251.4C961.7 251.5 960.7 252.1 959.8 252.2C958.9 252.4 957.9 252.3 957.0 252.5C956.1 252.6 955.2 252.8 954.3 253.0C953.4 253.1 952.4 253.3 951.5 253.3C950.6 253.4 949.7 253.3 948.8 253.2C947.9 253.2 946.9 253.3 946.0 253.2C945.1 253.1 944.2 252.8 943.3 252.8C942.4 252.8 941.4 253.2 940.5 253.4C939.6 253.5 938.7 253.7 937.8 253.8C936.9 254.0 935.9 254.0 935.0 254.2C934.1 254.3 933.1 254.7 932.3 254.9C931.4 255.0 930.4 255.1 929.5 255.2C928.6 255.3 927.6 255.4 926.8 255.5C925.9 255.7 924.9 256.0 924.0 256.1C923.1 256.1 922.1 256.0 921.3 255.9C920.4 255.9 919.4 255.8 918.5 255.7C917.6 255.7 916.6 255.5 915.8 255.5C914.9 255.6 913.9 255.9 913.0 256.2C912.1 256.4 911.1 256.8 910.3 256.9C909.4 257.0 908.4 256.8 907.5 256.9C906.6 257.1 905.6 257.5 904.8 257.7C903.9 258.0 902.9 258.3 902.0 258.6C901.1 258.9 900.2 259.2 899.3 259.7C898.3 260.1 896.9 260.9 895.8 261.4C894.7 261.8 893.4 262.6 892.4 262.4C891.4 262.2 890.5 260.7 889.6 260.0C888.7 259.3 887.9 258.6 886.9 258.3C885.9 258.0 884.5 258.3 883.4 258.1C882.3 257.9 880.9 257.4 880.0 256.9C879.1 256.4 878.8 255.2 878.0 255.1C877.2 255.1 875.9 256.2 874.9 256.6C873.9 257.0 872.8 257.1 871.8 257.6C870.8 258.1 869.7 259.1 868.7 259.7C867.7 260.3 866.6 261.0 865.6 261.3C864.7 261.6 863.7 261.5 862.7 261.7C861.8 261.9 860.8 262.3 859.9 262.5C858.9 262.6 858.0 262.6 857.0 262.5C855.9 262.5 854.5 262.3 853.3 261.9C852.1 261.5 850.7 260.5 849.6 260.1C848.5 259.6 847.5 259.4 846.5 259.0C845.5 258.6 844.4 257.8 843.4 257.6C842.4 257.4 841.3 257.8 840.3 258.0C839.3 258.2 838.5 257.9 837.2 258.8C835.9 259.8 833.9 262.4 832.3 263.8C830.7 265.2 828.9 267.7 827.3 267.5C825.7 267.3 824.0 263.5 822.4 262.5C820.8 261.6 818.8 261.3 817.4 261.3C816.1 261.3 814.9 262.4 813.7 262.6C812.6 262.8 811.2 262.6 810.0 262.5C808.8 262.5 807.5 262.4 806.3 262.6C805.1 262.8 803.8 263.3 802.6 263.8C801.4 264.2 800.1 264.7 798.9 265.3C797.7 265.9 796.4 266.5 795.2 267.5C794.0 268.4 792.9 268.6 791.5 271.2C790.1 273.8 788.1 283.0 786.6 283.5C785.0 284.1 783.0 277.9 781.6 274.9C780.2 271.9 779.3 267.2 777.9 265.0C776.5 262.8 774.4 261.9 773.0 261.3C771.6 260.7 770.4 261.4 769.3 261.4C768.1 261.4 766.9 260.9 765.6 261.3C764.2 261.7 761.9 263.0 760.6 263.8C759.3 264.6 758.5 265.2 757.5 266.2C756.5 267.2 755.4 269.4 754.4 270.0C753.4 270.5 752.3 269.9 751.3 269.7C750.4 269.5 749.5 268.5 748.3 268.7C747.0 269.0 744.9 271.0 743.3 271.2C741.7 271.4 739.7 270.5 738.4 270.0C737.1 269.4 736.3 268.7 735.3 267.9C734.3 267.1 733.3 264.5 732.2 265.0C731.1 265.5 729.9 270.4 728.5 271.2C727.1 272.0 725.1 269.0 723.5 270.0C722.0 270.9 720.0 277.4 718.6 277.4C717.2 277.4 716.0 271.0 714.9 270.0C713.8 268.9 712.8 270.8 711.8 270.9C710.8 271.1 709.7 271.3 708.7 271.2C707.7 271.0 706.6 270.8 705.6 270.0C704.6 269.2 703.8 265.9 702.5 266.3C701.3 266.6 699.2 269.9 697.6 272.4C696.0 275.0 694.2 282.9 692.7 282.3C691.1 281.7 688.9 269.5 687.7 268.7C686.5 267.9 686.4 277.8 685.2 277.4C684.1 277.0 681.7 266.8 680.3 266.3C678.9 265.7 677.8 272.7 676.6 273.7C675.4 274.7 674.0 272.1 672.9 272.4C671.8 272.8 670.8 274.7 669.8 275.7C668.8 276.7 668.0 277.2 666.7 278.6C665.4 280.1 663.1 284.4 661.8 284.8C660.5 285.2 659.7 282.8 658.7 281.1C657.7 279.3 656.9 274.1 655.6 273.7C654.3 273.3 652.2 279.4 650.7 278.6C649.1 277.8 646.9 269.5 645.7 268.7C644.5 267.9 644.1 273.2 643.2 273.7C642.4 274.2 641.1 272.6 640.2 271.8C639.2 271.0 638.3 269.8 637.1 268.7C635.8 267.6 633.5 264.1 632.1 265.0C630.7 266.0 629.6 271.6 628.4 274.6C627.2 277.6 626.1 281.5 624.7 283.5C623.3 285.6 621.3 288.4 619.8 287.3C618.2 286.1 616.4 277.1 614.8 276.1C613.2 275.1 611.5 278.9 609.9 281.1C608.3 283.3 606.5 291.7 604.9 289.7C603.4 287.7 601.3 269.9 600.0 268.7C598.7 267.5 597.7 279.0 596.5 282.3C595.4 285.7 593.9 288.6 592.8 289.7C591.7 290.8 590.7 289.3 589.7 289.1C588.7 288.9 587.9 289.8 586.6 288.5C585.3 287.2 583.3 281.9 581.7 281.1C580.1 280.3 578.1 283.7 576.7 283.5C575.4 283.4 574.1 279.6 573.0 279.8C572.0 280.1 570.9 284.0 570.0 285.0C569.0 286.0 568.1 282.7 566.9 286.0C565.6 289.3 563.3 304.4 561.9 305.8C560.5 307.2 559.4 298.0 558.2 294.8C557.0 291.6 555.7 287.5 554.5 286.0C553.3 284.6 552.0 285.9 550.8 285.7C549.6 285.5 548.2 284.6 547.1 284.8C546.0 285.0 545.0 286.1 544.0 286.9C543.0 287.7 542.0 290.3 540.9 289.7C539.8 289.2 538.6 285.9 537.2 283.5C535.8 281.2 533.6 276.0 532.3 274.9C531.0 273.8 530.2 276.5 529.2 276.8C528.2 277.2 527.4 276.7 526.1 277.4C524.8 278.0 522.5 276.3 521.2 281.1C519.8 285.9 518.6 305.2 517.4 307.5C516.3 309.8 514.9 299.2 513.7 295.6C512.6 292.0 511.1 286.2 510.0 284.8C509.0 283.4 508.1 286.3 507.1 287.0C506.2 287.7 505.2 288.5 504.3 289.3C503.3 290.1 502.4 290.7 501.4 292.2C500.3 293.6 498.8 298.1 497.7 298.4C496.6 298.7 495.6 295.2 494.6 294.0C493.6 292.8 492.4 292.2 491.5 291.0C490.6 289.7 490.2 288.6 489.0 286.0C487.8 283.4 485.5 273.9 484.1 274.9C482.7 275.9 481.6 287.5 480.4 292.5C479.2 297.4 477.9 306.2 476.7 305.8C475.5 305.4 474.0 290.9 473.0 289.7C472.0 288.5 471.5 297.2 470.5 298.4C469.5 299.6 468.0 298.4 466.8 297.2C465.6 296.0 464.5 289.8 463.1 291.0C461.7 292.1 459.7 304.2 458.1 304.6C456.6 304.9 454.8 296.0 453.2 293.4C451.6 290.9 449.5 289.1 448.3 288.5C447.0 287.9 446.2 289.3 445.2 289.5C444.2 289.7 443.4 288.9 442.1 289.7C440.8 290.6 438.4 294.3 437.1 294.7C435.9 295.1 435.0 293.9 434.0 292.3C433.1 290.7 432.0 284.8 431.0 284.8C429.9 284.8 428.4 290.2 427.3 292.4C426.1 294.6 424.9 298.4 423.5 298.4C422.2 298.3 420.2 292.8 418.6 292.2C417.0 291.6 415.2 293.9 413.7 294.7C412.1 295.5 410.3 297.1 408.7 297.1C407.1 297.1 405.4 296.1 403.8 294.7C402.2 293.3 400.4 291.5 398.8 288.5C397.3 285.5 395.3 277.5 393.9 276.1C392.5 274.8 391.4 279.2 390.2 280.2C389.0 281.2 387.7 280.7 386.5 282.3C385.3 284.0 384.0 288.7 382.8 290.5C381.6 292.3 380.3 293.9 379.1 293.4C377.9 293.0 376.6 289.0 375.4 287.7C374.2 286.3 372.7 285.8 371.7 284.8C370.6 283.8 369.6 282.3 368.6 281.5C367.6 280.7 366.8 277.7 365.5 279.8C364.2 281.9 362.1 294.1 360.5 294.7C359.0 295.3 356.9 285.3 355.6 283.5C354.3 281.8 353.5 283.9 352.5 283.7C351.5 283.5 350.5 283.5 349.4 282.3C348.3 281.1 346.8 275.5 345.7 276.1C344.6 276.7 343.6 282.9 342.6 286.0C341.6 289.2 340.6 293.3 339.5 295.9C338.4 298.5 337.2 304.8 335.8 302.1C334.4 299.3 332.2 282.0 330.9 278.6C329.6 275.2 328.8 280.5 327.8 280.9C326.8 281.3 325.8 282.0 324.7 281.1C323.6 280.1 322.1 275.5 321.0 274.9C319.9 274.3 318.9 277.2 317.9 277.4C316.9 277.6 315.8 276.3 314.8 276.1C313.8 276.0 312.7 276.7 311.7 276.3C310.7 275.9 309.7 273.5 308.6 273.7C307.6 273.8 306.3 276.2 304.9 277.4C303.6 278.6 301.2 280.6 300.0 281.1C298.8 281.6 298.1 280.4 297.1 280.4C296.2 280.4 295.5 280.3 294.3 281.2C293.0 282.1 290.7 284.2 289.3 286.1C288.0 288.1 286.8 293.5 285.6 293.5C284.4 293.5 283.3 289.3 281.9 286.1C280.5 283.0 278.6 276.0 277.0 273.8C275.4 271.6 273.6 272.1 272.0 272.5C270.5 272.9 268.3 276.3 267.1 276.3C265.9 276.3 265.6 273.4 264.6 272.5C263.6 271.7 262.1 272.0 260.9 271.2C259.7 270.4 258.4 267.9 257.2 267.6C256.0 267.3 254.7 269.3 253.5 269.5C252.3 269.7 251.0 268.6 249.8 268.8C248.6 269.1 247.3 270.0 246.1 270.8C244.9 271.6 243.8 272.5 242.4 273.8C241.0 275.0 238.8 278.8 237.4 278.7C236.1 278.6 234.9 274.7 233.7 273.2C232.6 271.6 231.2 269.9 230.0 268.8C228.8 267.8 227.5 267.2 226.3 266.6C225.1 266.0 223.8 264.9 222.6 265.1C221.4 265.3 220.1 267.2 218.9 267.8C217.7 268.4 216.6 269.1 215.2 268.8C213.8 268.6 211.6 266.7 210.3 266.4C208.9 266.1 207.7 267.1 206.6 266.9C205.4 266.7 204.0 265.5 202.9 265.1C201.7 264.8 200.6 264.9 199.6 264.8C198.5 264.7 197.3 264.5 196.3 264.4C195.2 264.2 194.1 263.9 193.0 263.9C191.8 263.9 190.4 264.6 189.3 264.4C188.1 264.2 186.7 261.7 185.6 262.7C184.4 263.6 183.0 269.9 181.8 270.1C180.7 270.3 179.3 264.9 178.1 263.9C177.0 262.9 175.9 264.1 174.8 263.8C173.8 263.6 172.6 262.6 171.6 262.2C170.5 261.8 169.3 261.6 168.3 261.4C167.2 261.3 166.0 261.5 165.0 261.2C163.9 260.9 162.7 259.9 161.7 259.5C160.6 259.2 159.4 259.2 158.4 259.0C157.3 258.8 156.1 258.5 155.1 258.3C154.0 258.1 152.8 258.0 151.8 257.8C150.7 257.5 149.5 256.5 148.5 256.5C147.4 256.4 146.2 257.1 145.2 257.4C144.1 257.6 143.0 257.9 141.9 257.9C140.8 258.0 139.7 257.9 138.6 257.7C137.5 257.5 136.1 257.2 134.9 256.8C133.7 256.4 132.3 255.6 131.2 255.2C130.1 254.9 129.1 254.7 128.1 254.7C127.1 254.7 126.0 255.0 125.0 255.0C124.0 255.0 122.9 254.7 121.9 254.6C120.9 254.4 119.8 254.1 118.8 254.0C117.9 253.9 116.7 253.8 115.7 253.8C114.8 253.8 113.6 253.8 112.7 253.8C111.7 253.7 110.6 253.6 109.6 253.5C108.6 253.3 107.5 253.0 106.5 252.8C105.5 252.6 104.4 252.5 103.4 252.3C102.4 252.1 101.3 251.7 100.3 251.5C99.3 251.2 98.2 251.0 97.2 250.8C96.2 250.7 95.1 250.5 94.1 250.3C93.1 250.1 92.0 250.0 91.0 249.8C90.1 249.7 88.9 249.5 88.0 249.4C87.0 249.3 85.9 249.1 84.9 249.0C83.9 248.9 82.7 248.6 81.8 248.6C80.8 248.5 79.8 248.6 78.8 248.6C77.9 248.6 76.8 248.5 75.8 248.4C74.9 248.4 73.8 248.3 72.9 248.3C71.9 248.2 70.9 248.1 69.9 248.0C69.0 247.9 67.8 247.8 66.9 247.8C66.1 247.8 65.2 247.9 64.3 247.9C63.5 247.9 62.6 247.9 61.7 247.9C60.9 247.8 59.9 247.8 59.1 247.8C58.3 247.8 57.3 247.8 56.5 247.8C55.6 247.8 54.7 247.7 53.9 247.7C53.0 247.7 52.1 247.7 51.3 247.7C50.4 247.7 49.5 247.7 48.6 247.7C47.8 247.7 46.9 247.8 46.0 247.7C45.2 247.7 44.2 247.7 43.4 247.7C42.6 247.7 41.6 247.7 40.8 247.8C39.9 247.8 39.0 247.8 38.2 247.8C37.3 247.8 36.4 247.7 35.6 247.7C34.7 247.7 33.8 247.7 32.9 247.7C32.1 247.7 31.2 247.7 30.3 247.7C29.5 247.7 28.5 247.7 27.7 247.7C26.9 247.7 25.9 247.6 25.1 247.6C24.3 247.6 22.9 247.5 22.5 247.6C22.1 247.6 22.6 247.9 22.6 247.9Z" fill="#dfdfdf" stroke="#dfdfdf" stroke-width="0.8" stroke-linejoin="round"/><path d="M22.6 246H1166" stroke="#cdcdcd" stroke-width="1"/><path d="M69 343.3L210.7 147.5V343.3z" fill="#ffffff" fill-opacity="0.235"/><path d="M956.5 147.5V343.3H1166z" fill="#ffffff" fill-opacity="0.235"/></svg>
<div class="b" style="left:66.2px;top:147.5px;width:3.1px;height:195.8px;background:#ffffff;border-radius:0px;"></div>
<div class="b" style="left:67.0px;top:147.5px;width:10.0px;height:22.7px;background:#ffffff;border-radius:0px;border-radius:0 0 7px 0;"></div>
<div class="b" style="left:60.8px;top:237.0px;width:7.7px;height:19.6px;background:#ffffff;border-radius:2px;"></div>
<div class="b" style="left:1165.6px;top:147.5px;width:1.9px;height:195.8px;background:#ffffff;border-radius:0px;"></div>
<div class="b" style="left:1158.0px;top:147.5px;width:9.5px;height:21.8px;background:#ffffff;border-radius:0px;border-radius:0 0 0 7px;"></div>
<div class="b" style="left:212.0px;top:326.2px;width:16.2px;height:16.8px;background:#ffffff;border-radius:3px;"></div>
<div class="b" style="left:938.6px;top:327.0px;width:16.4px;height:16.2px;background:#ffffff;border-radius:3px;"></div>
<svg style="left:0;top:0" width="1214" height="360"><path d="M216.2 338.6l7.6-7.6" stroke="#111" stroke-width="2.3" stroke-linecap="round"/><path d="M943 331.2l7.6 7.6" stroke="#111" stroke-width="2.3" stroke-linecap="round"/></svg>
<span class="t" style="left:955.7px;top:324.8px;font-size:16px;line-height:16px;font-weight:700;color:#f2a3ca;transform:scaleX(1.026);">WA VocalFX Blur 01 G3</span>
<div class="b" style="left:1173.4px;top:148.5px;width:35.0px;height:100.5px;background:#c6c5c3;border-radius:0px;"></div>
<div class="b" style="left:1177.7px;top:156.0px;width:26.5px;height:24.2px;background:#7bbcf5;border-radius:8.5px;"></div>
<div class="b" style="left:1177.7px;top:187.3px;width:26.5px;height:23.9px;background:#eae9e7;border-radius:8.5px;"></div>
<div class="b" style="left:1177.7px;top:217.9px;width:26.5px;height:23.9px;background:#eae9e7;border-radius:8.5px;"></div>
<svg style="left:0;top:0" width="1214" height="360"><path d="M1189.500 128v11.500l-6.400-5.750z M1193.700 128v11.500l6.400-5.750z" fill="#1c1c1c"/><path d="M1186 326.400V340.500H1200.200 M1182.200 329.800H1196.500V343.900" stroke="#161616" stroke-width="2.700" fill="none"/></svg>
<svg style="left:0;top:0" width="1214" height="360" fill="none" stroke="#1a1a1a"><path d="M1198.1 162.6H1190.6a4.800 4.800 0 0 0 0 9.600H1198.1" stroke-width="3"/><path d="M1194.8999999999999 160.4v4.500M1194.8999999999999 169.9v4.500" stroke="#7bbcf5" stroke-width="1.100"/><path d="M1186.0 159.70000000000002L1199.1999999999998 175.70000000000002" stroke-width="1.500"/></svg>
<svg style="left:0;top:0" width="1214" height="360" fill="none" stroke="#1a1a1a"><path d="M1198.1 193.89999999999998H1190.6a4.800 4.800 0 0 0 0 9.600H1198.1" stroke-width="3"/><path d="M1194.8999999999999 191.7v4.500M1194.8999999999999 201.2v4.500" stroke="#eae9e7" stroke-width="1.100"/><path d="M1192.3 190.29999999999998V203.2" stroke-width="1.600"/><ellipse cx="1189.8999999999999" cy="203.7" rx="2.300" ry="2" fill="#1a1a1a" stroke="none"/></svg>
<svg style="left:0;top:0" width="1214" height="360" fill="none" stroke="#1a1a1a"><path d="M1198.1 225.2H1190.6a4.800 4.800 0 0 0 0 9.600H1198.1" stroke-width="3"/><path d="M1194.8999999999999 223v4.500M1194.8999999999999 232.5v4.500" stroke="#eae9e7" stroke-width="1.100"/><path d="M1192.3 222V238" stroke-width="1.600"/><circle cx="1188.8" cy="230" r="1.500" fill="#1a1a1a" stroke="none"/></svg>
<div class="b" style="left:36.0px;top:371.9px;width:166.4px;height:100.5px;background:#d6d5d4;border-radius:19px;"></div>
<span class="t" style="left:52.9px;top:386.3px;font-size:15.6px;line-height:15.6px;font-weight:400;color:#202020;transform:scaleX(1.030);letter-spacing:0.07px;-webkit-text-stroke:0.55px #202020;">GAIN</span>
<span class="t" style="left:52.9px;top:416.5px;font-size:15.6px;line-height:15.6px;font-weight:400;color:#202020;transform:scaleX(0.934);-webkit-text-stroke:0.55px #202020;">ROOT</span>
<span class="t" style="left:52.9px;top:445.7px;font-size:15.6px;line-height:15.6px;font-weight:400;color:#202020;transform:scaleX(1.030);letter-spacing:0.38px;-webkit-text-stroke:0.55px #202020;">BPM</span>
<div class="b" style="left:130.5px;top:382.7px;width:54.5px;height:21.8px;background:#ecebe9;border-radius:9.5px;"></div>
<span class="t" style="left:148.0px;top:386.8px;font-size:14px;line-height:14px;font-weight:700;color:#141414;transform:scaleX(1.000);">0.0</span>
<div class="b" style="left:130.5px;top:413.0px;width:54.5px;height:21.4px;background:#ecebe9;border-radius:9.5px;"></div>
<span class="t" style="left:148.4px;top:416.9px;font-size:14px;line-height:14px;font-weight:700;color:#141414;transform:scaleX(1.000);">G3</span>
<div class="b" style="left:130.5px;top:443.5px;width:54.5px;height:21.5px;background:#ecebe9;border-radius:9.5px;"></div>
<span class="t" style="left:140.2px;top:447.4px;font-size:14px;line-height:14px;font-weight:700;color:#141414;transform:scaleX(1.000);">120.5</span>
<svg style="left:0;top:0" width="1214" height="934"><circle cx="111.4" cy="425.3" r="10.4" fill="#1c1c1c"/><circle cx="111.4" cy="453.9" r="10.4" fill="#1c1c1c"/><path d="M112.6 418.6L110.3 432.6" stroke="#f0f0f0" stroke-width="1.5"/><circle cx="112.6" cy="418.6" r="1.3" fill="#f0f0f0"/><circle cx="110.3" cy="432.8" r="1.4" fill="#f0f0f0"/><circle cx="111.6" cy="426" r="3.3" fill="none" stroke="#f0f0f0" stroke-width="1.5"/><path d="M111 447.6l1.700-0.600 4.300 13-3 0.500z" fill="#f0f0f0"/><path d="M105.600 451.900L109.800 460" stroke="#f0f0f0" stroke-width="2" stroke-linecap="round"/><circle cx="105.400" cy="451.700" r="1.700" fill="#f0f0f0"/><path d="M105.900 458.200h2.100l0.700 2.400h-3.300z" fill="#f0f0f0"/></svg>
<span class="t" style="left:229.5px;top:377.0px;font-size:15.6px;line-height:15.6px;font-weight:400;color:#202020;transform:scaleX(1.001);-webkit-text-stroke:0.55px #202020;">TUNE</span>
<div class="b" style="left:280.0px;top:374.8px;width:44.6px;height:19.8px;background:#d9d8d7;border-radius:9.9px;"></div>
<span class="t" style="left:294.1px;top:377.8px;font-size:14.5px;line-height:14.5px;font-weight:400;color:#1c1c1c;transform:scaleX(1.000);">12</span>
<div class="b" style="left:249.1px;top:404.4px;width:57.6px;height:57.6px;border-radius:50%;background:linear-gradient(180deg,#6a6d6d 0%,#4e5050 55%,#2f3131 100%);box-shadow:0 7.5px 11.5px rgba(0,0,0,0.13),0 0 10.1px 1px rgba(228,240,242,0.9);"></div>
<div class="b" style="left:250.5px;top:405.7px;width:54.8px;height:53.4px;border-radius:50%;background:linear-gradient(168deg,#f1f1f1 5%,#e7e7e7 45%,#d9d9d9 95%);"></div>
<div class="b" style="left:276.9px;top:406.6px;width:2.1px;height:26.6px;background:#141414;transform-origin:50% 100%;transform:rotate(72deg);"></div>
<div class="b" style="left:276.6px;top:396.1px;width:2.6px;height:2.6px;background:#a3a3a3;border-radius:2px;"></div>
<div class="b" style="left:254.5px;top:460.6px;width:2.6px;height:2.6px;background:#a3a3a3;border-radius:2px;"></div>
<div class="b" style="left:298.7px;top:460.6px;width:2.6px;height:2.6px;background:#a3a3a3;border-radius:2px;"></div>
<span class="t" style="left:358.3px;top:389.9px;font-size:15.6px;line-height:15.6px;font-weight:400;color:#202020;transform:scaleX(0.993);-webkit-text-stroke:0.55px #202020;">FINE</span>
<div class="b" style="left:359.2px;top:415.0px;width:36.8px;height:36.8px;border-radius:50%;background:linear-gradient(180deg,#6a6d6d 0%,#4e5050 55%,#2f3131 100%);box-shadow:0 4.8px 7.4px rgba(0,0,0,0.13),0 0 6.4px 1px rgba(228,240,242,0.9);"></div>
<div class="b" style="left:360.6px;top:416.3px;width:34.0px;height:32.6px;border-radius:50%;background:linear-gradient(168deg,#f1f1f1 5%,#e7e7e7 45%,#d9d9d9 95%);"></div>
<div class="b" style="left:376.6px;top:417.2px;width:2.1px;height:16.2px;background:#141414;transform-origin:50% 100%;transform:rotate(0deg);"></div>
<div class="b" style="left:376.3px;top:408.9px;width:2.6px;height:2.6px;background:#a3a3a3;border-radius:2px;"></div>
<div class="b" style="left:356.5px;top:450.1px;width:2.6px;height:2.6px;background:#a3a3a3;border-radius:2px;"></div>
<div class="b" style="left:396.1px;top:450.1px;width:2.6px;height:2.6px;background:#a3a3a3;border-radius:2px;"></div>
<div class="b" style="left:459.6px;top:384.0px;width:89.7px;height:50.0px;background:#d5d4d3;border-radius:24px;box-shadow:0 0 0 1.5px rgba(255,255,255,0.38);"></div>
<svg style="left:0;top:0" width="1214" height="934"><path d="M509 400.9h-18.4a9.6 9.6 0 0 0 0 19.2h27.4a9.6 9.6 0 0 0 0-19.2" stroke="#111" stroke-width="2.6" fill="none"/><path d="M506.6 394.4l10.6 6.5-10.6 6.5z" fill="#111"/></svg>
<div class="b" style="left:449.7px;top:445.2px;width:57.6px;height:27.2px;background:#e5e4e2;border-radius:13px;"></div>
<div class="b" style="left:519.0px;top:445.2px;width:42.0px;height:27.2px;background:#e1e0de;border-radius:13px;"></div>
<svg style="left:0;top:0" width="1214" height="934"><ellipse cx="537.2" cy="464.2" rx="3.6" ry="3" fill="#b4b3b1"/><path d="M539.8 464.2V451.6h5.4" stroke="#b4b3b1" stroke-width="2" fill="none"/></svg>
<svg style="left:0;top:0" width="1214" height="934" fill="#1c1c1c"><rect x="634.200" y="380.600" width="2.700" height="10" rx="1.300"/><rect x="637.200" y="377.800" width="2.800" height="12" rx="1.400"/><rect x="640.400" y="377.500" width="2.800" height="12" rx="1.400"/><rect x="643.600" y="379.300" width="2.700" height="11" rx="1.300"/><path d="M634.200 386.500h12.100v5.500a5.300 5.300 0 0 1-5.300 5.300h-1.500a5.300 5.300 0 0 1-5.300-5.300z"/><path d="M645 393.500L648.400 388.300" stroke="#1c1c1c" stroke-width="2.800" stroke-linecap="round"/><path d="M639 425.500h9.600" stroke="#1c1c1c" stroke-width="4.300" stroke-linecap="round"/><path d="M641.800 419L631.200 425.500l10.600 6.500z"/><path d="M635.600 458h7" stroke="#1c1c1c" stroke-width="3.800" stroke-linecap="round"/><path d="M641.200 453.200l8.400 4.800-8.400 4.800z"/><path d="M646 469.400h-7" stroke="#1c1c1c" stroke-width="3.800" stroke-linecap="round"/><path d="M640.400 464.600l-8.400 4.800 8.400 4.800z"/></svg>
<span class="t" style="left:691.0px;top:378.3px;font-size:15.6px;line-height:15.6px;font-weight:400;color:#202020;transform:scaleX(0.983);-webkit-text-stroke:0.55px #202020;">SPEED</span>
<div class="b" style="left:688.7px;top:404.2px;width:57.6px;height:57.6px;border-radius:50%;background:linear-gradient(180deg,#6a6d6d 0%,#4e5050 55%,#2f3131 100%);box-shadow:0 7.5px 11.5px rgba(0,0,0,0.13),0 0 10.1px 1px rgba(228,240,242,0.9);"></div>
<div class="b" style="left:690.1px;top:405.5px;width:54.8px;height:53.4px;border-radius:50%;background:linear-gradient(168deg,#f1f1f1 5%,#e7e7e7 45%,#d9d9d9 95%);"></div>
<div class="b" style="left:716.5px;top:406.4px;width:2.1px;height:26.6px;background:#141414;transform-origin:50% 100%;transform:rotate(0deg);"></div>
<div class="b" style="left:716.2px;top:395.9px;width:2.6px;height:2.6px;background:#a3a3a3;border-radius:2px;"></div>
<div class="b" style="left:694.1px;top:460.4px;width:2.6px;height:2.6px;background:#a3a3a3;border-radius:2px;"></div>
<div class="b" style="left:738.3px;top:460.4px;width:2.6px;height:2.6px;background:#a3a3a3;border-radius:2px;"></div>
<div class="b" style="left:773.8px;top:395.8px;width:42.0px;height:27.2px;background:#d9d8d7;border-radius:10.5px;box-shadow:0 0 0 1.5px rgba(255,255,255,0.38);"></div>
<div class="b" style="left:773.8px;top:437.8px;width:42.0px;height:27.2px;background:#d9d8d7;border-radius:10.5px;box-shadow:0 0 0 1.5px rgba(255,255,255,0.38);"></div>
<span class="t" style="left:784.9px;top:402.1px;font-size:14.5px;line-height:14.5px;font-weight:700;color:#1c1c1c;transform:scaleX(1.000);">x 2</span>
<span class="t" style="left:786.5px;top:443.6px;font-size:14.5px;line-height:14.5px;font-weight:700;color:#1c1c1c;transform:scaleX(1.000);">: 2</span>
<span class="t" style="left:892.7px;top:377.8px;font-size:15.6px;line-height:15.6px;font-weight:400;color:#202020;transform:scaleX(1.023);-webkit-text-stroke:0.55px #202020;">WIDTH</span>
<div class="b" style="left:889.4px;top:404.3px;width:57.6px;height:57.6px;border-radius:50%;background:linear-gradient(180deg,#6a6d6d 0%,#4e5050 55%,#2f3131 100%);box-shadow:0 7.5px 11.5px rgba(0,0,0,0.13),0 0 10.1px 1px rgba(228,240,242,0.9);"></div>
<div class="b" style="left:890.8px;top:405.6px;width:54.8px;height:53.4px;border-radius:50%;background:linear-gradient(168deg,#f1f1f1 5%,#e7e7e7 45%,#d9d9d9 95%);"></div>
<div class="b" style="left:917.2px;top:406.5px;width:2.1px;height:26.6px;background:#141414;transform-origin:50% 100%;transform:rotate(0deg);"></div>
<div class="b" style="left:916.9px;top:396.0px;width:2.6px;height:2.6px;background:#a3a3a3;border-radius:2px;"></div>
<div class="b" style="left:894.8px;top:460.5px;width:2.6px;height:2.6px;background:#a3a3a3;border-radius:2px;"></div>
<div class="b" style="left:939.0px;top:460.5px;width:2.6px;height:2.6px;background:#a3a3a3;border-radius:2px;"></div>
<span class="t" style="left:998.4px;top:377.8px;font-size:15.6px;line-height:15.6px;font-weight:400;color:#202020;transform:scaleX(1.030);letter-spacing:0.37px;-webkit-text-stroke:0.55px #202020;">PAN</span>
<div class="b" style="left:987.7px;top:404.3px;width:57.6px;height:57.6px;border-radius:50%;background:linear-gradient(180deg,#6a6d6d 0%,#4e5050 55%,#2f3131 100%);box-shadow:0 7.5px 11.5px rgba(0,0,0,0.13),0 0 10.1px 1px rgba(228,240,242,0.9);"></div>
<div class="b" style="left:989.1px;top:405.6px;width:54.8px;height:53.4px;border-radius:50%;background:linear-gradient(168deg,#f1f1f1 5%,#e7e7e7 45%,#d9d9d9 95%);"></div>
<div class="b" style="left:1015.5px;top:406.5px;width:2.1px;height:26.6px;background:#141414;transform-origin:50% 100%;transform:rotate(0deg);"></div>
<div class="b" style="left:1015.2px;top:396.0px;width:2.6px;height:2.6px;background:#a3a3a3;border-radius:2px;"></div>
<div class="b" style="left:993.1px;top:460.5px;width:2.6px;height:2.6px;background:#a3a3a3;border-radius:2px;"></div>
<div class="b" style="left:1037.3px;top:460.5px;width:2.6px;height:2.6px;background:#a3a3a3;border-radius:2px;"></div>
<span class="t" style="left:1077.7px;top:377.8px;font-size:15.6px;line-height:15.6px;font-weight:400;color:#202020;transform:scaleX(0.999);-webkit-text-stroke:0.55px #202020;">VOL</span>
<div class="b" style="left:1117.4px;top:375.6px;width:43.1px;height:19.0px;background:#d9d8d7;border-radius:9.5px;"></div>
<span class="t" style="left:1122.5px;top:377.9px;font-size:14.5px;line-height:14.5px;font-weight:400;color:#1c1c1c;transform:scaleX(1.000);">-28.6</span>
<div class="b" style="left:1086.3px;top:404.3px;width:57.6px;height:57.6px;border-radius:50%;background:linear-gradient(180deg,#6a6d6d 0%,#4e5050 55%,#2f3131 100%);box-shadow:0 7.5px 11.5px rgba(0,0,0,0.13),0 0 10.1px 1px rgba(228,240,242,0.9);"></div>
<div class="b" style="left:1087.7px;top:405.6px;width:54.8px;height:53.4px;border-radius:50%;background:linear-gradient(168deg,#f1f1f1 5%,#e7e7e7 45%,#d9d9d9 95%);"></div>
<div class="b" style="left:1114.1px;top:406.5px;width:2.1px;height:26.6px;background:#141414;transform-origin:50% 100%;transform:rotate(-52deg);"></div>
<div class="b" style="left:1091.7px;top:460.5px;width:2.6px;height:2.6px;background:#a3a3a3;border-radius:2px;"></div>
<div class="b" style="left:1135.9px;top:460.5px;width:2.6px;height:2.6px;background:#a3a3a3;border-radius:2px;"></div>
<div class="b" style="left:16.2px;top:493.2px;width:585.8px;height:114.8px;background:#d4dfe2;border-radius:0px;border-radius:0 0 0 32px;"></div>
<div class="b" style="left:611.4px;top:493.2px;width:587.4px;height:114.8px;background:#dad9d8;border-radius:0px;border-radius:0 0 32px 0;"></div>
<div class="b" style="left:24.3px;top:500.6px;width:20.8px;height:20.8px;background:#6cb6f5;border-radius:11px;border:3.2px solid #222e39;"></div>
<span class="t" style="left:52.5px;top:503.3px;font-size:15.6px;line-height:15.6px;font-weight:400;color:#202020;transform:scaleX(1.000);-webkit-text-stroke:0.55px #202020;">FILTER</span>
<div class="b" style="left:48.0px;top:542.5px;width:62.4px;height:36.5px;background:#eceae8;border-radius:15px;"></div>
<div class="b" style="left:65.6px;top:561.8px;width:7.2px;height:2.4px;background:#1c1c1c;border-radius:0px;"></div>
<svg style="left:0;top:0" width="1214" height="934"><path d="M90.200 558.400h11l-5.500 8.400z" fill="#1c1c1c"/></svg>
<span class="t" style="left:60.5px;top:585.6px;font-size:11.2px;line-height:11.2px;font-weight:700;color:#3a4048;transform:scaleX(1.000);-webkit-text-stroke:0.25px #3a4048;">GROUP</span>
<div class="b" style="left:143.4px;top:527.5px;width:77.9px;height:61.3px;background:#e4eaeb;border-radius:8px;"></div>
<div class="b" style="left:232.4px;top:527.5px;width:40.3px;height:61.3px;background:#e4eaeb;border-radius:8px;"></div>
<div class="b" style="left:146.0px;top:529.7px;width:34.5px;height:27.0px;background:#d3d3d2;border-radius:10px;"></div>
<div class="b" style="left:183.7px;top:529.7px;width:34.6px;height:27.0px;background:#d3d3d2;border-radius:10px;"></div>
<div class="b" style="left:146.0px;top:559.9px;width:34.5px;height:26.9px;background:#6cb6f5;border-radius:10px;"></div>
<div class="b" style="left:183.7px;top:559.9px;width:34.6px;height:26.9px;background:#d3d3d2;border-radius:10px;"></div>
<div class="b" style="left:235.4px;top:529.7px;width:34.6px;height:27.0px;background:#6cb6f5;border-radius:10px;"></div>
<div class="b" style="left:235.4px;top:559.9px;width:34.6px;height:26.9px;background:#d3d3d2;border-radius:10px;"></div>
<span class="t" style="left:243.5px;top:535.3px;font-size:16.6px;line-height:16.6px;font-weight:700;color:#141414;transform:scaleX(1.000);-webkit-text-stroke:0.3px #141414;">12</span>
<span class="t" style="left:243.5px;top:565.3px;font-size:16.6px;line-height:16.6px;font-weight:700;color:#141414;transform:scaleX(1.000);-webkit-text-stroke:0.3px #141414;">24</span>
<svg style="left:0;top:0" width="1214" height="934" fill="none" stroke="#161616" stroke-width="2.3" stroke-linecap="round" stroke-linejoin="round"><path d="M152.800 540h8.600c3.200 0 3.800 7 7.400 8.400"/><path d="M192.600 548.600c3.400-1.400 4-8.600 7.200-8.600h9.400"/><path d="M154 578.400c1.600-3 2.400-9 5.400-9h8c3 0 3.800 6 5.400 9"/><path d="M202.900 567.600v6.400M193 579.600c5-0.600 9.900-1.600 9.900-5.600c0 4 4.900 5 9.900 5.600"/></svg>
<span class="t" style="left:307.7px;top:503.1px;font-size:15.6px;line-height:15.6px;font-weight:400;color:#202020;transform:scaleX(1.013);-webkit-text-stroke:0.55px #202020;">CUTOFF</span>
<div class="b" style="left:314.3px;top:530.3px;width:57.4px;height:57.4px;border-radius:50%;background:linear-gradient(180deg,#6a6d6d 0%,#4e5050 55%,#2f3131 100%);box-shadow:0 7.5px 11.5px rgba(0,0,0,0.13),0 0 10.0px 1px rgba(228,240,242,0.9);"></div>
<div class="b" style="left:315.7px;top:531.6px;width:54.6px;height:53.2px;border-radius:50%;background:linear-gradient(168deg,#f1f1f1 5%,#e7e7e7 45%,#d9d9d9 95%);"></div>
<div class="b" style="left:342.0px;top:532.5px;width:2.1px;height:26.5px;background:#141414;transform-origin:50% 100%;transform:rotate(24deg);"></div>
<div class="b" style="left:319.6px;top:586.3px;width:2.6px;height:2.6px;background:#a3a3a3;border-radius:2px;"></div>
<div class="b" style="left:363.8px;top:586.3px;width:2.6px;height:2.6px;background:#a3a3a3;border-radius:2px;"></div>
<span class="t" style="left:424.0px;top:503.1px;font-size:15.6px;line-height:15.6px;font-weight:400;color:#202020;transform:scaleX(0.948);-webkit-text-stroke:0.55px #202020;">RES</span>
<div class="b" style="left:413.0px;top:530.3px;width:57.4px;height:57.4px;border-radius:50%;background:linear-gradient(180deg,#6a6d6d 0%,#4e5050 55%,#2f3131 100%);box-shadow:0 7.5px 11.5px rgba(0,0,0,0.13),0 0 10.0px 1px rgba(228,240,242,0.9);"></div>
<div class="b" style="left:414.4px;top:531.6px;width:54.6px;height:53.2px;border-radius:50%;background:linear-gradient(168deg,#f1f1f1 5%,#e7e7e7 45%,#d9d9d9 95%);"></div>
<div class="b" style="left:440.7px;top:532.5px;width:2.1px;height:26.5px;background:#141414;transform-origin:50% 100%;transform:rotate(-143deg);"></div>
<div class="b" style="left:418.3px;top:586.3px;width:2.6px;height:2.6px;background:#a3a3a3;border-radius:2px;"></div>
<div class="b" style="left:462.5px;top:586.3px;width:2.6px;height:2.6px;background:#a3a3a3;border-radius:2px;"></div>
<span class="t" style="left:512.0px;top:503.1px;font-size:15.6px;line-height:15.6px;font-weight:400;color:#202020;transform:scaleX(1.007);-webkit-text-stroke:0.55px #202020;">DRIVE</span>
<div class="b" style="left:510.0px;top:530.3px;width:57.4px;height:57.4px;border-radius:50%;background:linear-gradient(180deg,#6a6d6d 0%,#4e5050 55%,#2f3131 100%);box-shadow:0 7.5px 11.5px rgba(0,0,0,0.13),0 0 10.0px 1px rgba(228,240,242,0.9);"></div>
<div class="b" style="left:511.4px;top:531.6px;width:54.6px;height:53.2px;border-radius:50%;background:linear-gradient(168deg,#f1f1f1 5%,#e7e7e7 45%,#d9d9d9 95%);"></div>
<div class="b" style="left:537.7px;top:532.5px;width:2.1px;height:26.5px;background:#141414;transform-origin:50% 100%;transform:rotate(-61deg);"></div>
<div class="b" style="left:515.3px;top:586.3px;width:2.6px;height:2.6px;background:#a3a3a3;border-radius:2px;"></div>
<div class="b" style="left:559.5px;top:586.3px;width:2.6px;height:2.6px;background:#a3a3a3;border-radius:2px;"></div>
<span class="t" style="left:647.6px;top:503.1px;font-size:15.6px;line-height:15.6px;font-weight:400;color:#202020;transform:scaleX(0.990);-webkit-text-stroke:0.55px #202020;">ADSR</span>
<div class="b" style="left:638.8px;top:541.4px;width:62.4px;height:38.0px;background:#e3e2e0;border-radius:14px;"></div>
<div class="b" style="left:640.8px;top:543.4px;width:58.4px;height:34.0px;background:#1e1e1e;border-radius:12px;"></div>
<span class="t" style="left:650.0px;top:550.9px;font-size:19.5px;line-height:19.5px;font-weight:400;color:#d63891;transform:scaleX(0.956);-webkit-text-stroke:0.7px #d63891;">A1</span>
<svg style="left:0;top:0" width="1214" height="934"><path d="M682.800 559.200h8.400l-4.200 6z" fill="#f0f0f0"/></svg>
<span class="t" style="left:725.6px;top:503.1px;font-size:15.6px;line-height:15.6px;font-weight:400;color:#202020;transform:scaleX(1.030);letter-spacing:0.27px;-webkit-text-stroke:0.55px #202020;">ATTACK</span>
<div class="b" style="left:731.0px;top:530.6px;width:57.2px;height:57.2px;border-radius:50%;background:linear-gradient(180deg,#707070 0%,#2c2c2c 28%,#101010 100%);box-shadow:0 9.2px 12.0px rgba(0,0,0,0.28),0 0 8.6px 1px rgba(240,240,238,0.8);"></div>
<div class="b" style="left:732.3px;top:532.3px;width:54.6px;height:53.6px;border-radius:50%;background:linear-gradient(180deg,#242424 0%,#1b1b1b 100%);"></div>
<div class="b" style="left:758.2px;top:533.1px;width:2.6px;height:26.1px;background:linear-gradient(180deg,#e6e6e6,#c4c4c4);border-radius:1px;transform-origin:50% 100%;transform:rotate(2.5deg);"></div>
<div class="b" style="left:736.2px;top:587.9px;width:2.6px;height:2.6px;background:#9a9a9a;border-radius:2px;"></div>
<div class="b" style="left:780.4px;top:587.9px;width:2.6px;height:2.6px;background:#9a9a9a;border-radius:2px;"></div>
<span class="t" style="left:832.4px;top:503.1px;font-size:15.6px;line-height:15.6px;font-weight:400;color:#202020;transform:scaleX(0.972);-webkit-text-stroke:0.55px #202020;">DECAY</span>
<div class="b" style="left:829.6px;top:530.6px;width:57.2px;height:57.2px;border-radius:50%;background:linear-gradient(180deg,#707070 0%,#2c2c2c 28%,#101010 100%);box-shadow:0 9.2px 12.0px rgba(0,0,0,0.28),0 0 8.6px 1px rgba(240,240,238,0.8);"></div>
<div class="b" style="left:830.9px;top:532.3px;width:54.6px;height:53.6px;border-radius:50%;background:linear-gradient(180deg,#242424 0%,#1b1b1b 100%);"></div>
<div class="b" style="left:856.8px;top:533.1px;width:2.6px;height:26.1px;background:linear-gradient(180deg,#e6e6e6,#c4c4c4);border-radius:1px;transform-origin:50% 100%;transform:rotate(12.7deg);"></div>
<div class="b" style="left:834.8px;top:587.9px;width:2.6px;height:2.6px;background:#9a9a9a;border-radius:2px;"></div>
<div class="b" style="left:879.0px;top:587.9px;width:2.6px;height:2.6px;background:#9a9a9a;border-radius:2px;"></div>
<span class="t" style="left:919.4px;top:503.2px;font-size:15.6px;line-height:15.6px;font-weight:400;color:#202020;transform:scaleX(1.030);letter-spacing:0.14px;-webkit-text-stroke:0.55px #202020;">SUSTAIN</span>
<div class="b" style="left:928.3px;top:530.6px;width:57.2px;height:57.2px;border-radius:50%;background:linear-gradient(180deg,#707070 0%,#2c2c2c 28%,#101010 100%);box-shadow:0 9.2px 12.0px rgba(0,0,0,0.28),0 0 8.6px 1px rgba(240,240,238,0.8);"></div>
<div class="b" style="left:929.6px;top:532.3px;width:54.6px;height:53.6px;border-radius:50%;background:linear-gradient(180deg,#242424 0%,#1b1b1b 100%);"></div>
<div class="b" style="left:955.5px;top:533.1px;width:2.6px;height:26.1px;background:linear-gradient(180deg,#e6e6e6,#c4c4c4);border-radius:1px;transform-origin:50% 100%;transform:rotate(142deg);"></div>
<div class="b" style="left:933.5px;top:587.9px;width:2.6px;height:2.6px;background:#9a9a9a;border-radius:2px;"></div>
<div class="b" style="left:977.7px;top:587.9px;width:2.6px;height:2.6px;background:#9a9a9a;border-radius:2px;"></div>
<span class="t" style="left:1019.0px;top:503.2px;font-size:15.6px;line-height:15.6px;font-weight:400;color:#202020;transform:scaleX(0.981);-webkit-text-stroke:0.55px #202020;">RELEASE</span>
<div class="b" style="left:1026.6px;top:530.6px;width:57.2px;height:57.2px;border-radius:50%;background:linear-gradient(180deg,#707070 0%,#2c2c2c 28%,#101010 100%);box-shadow:0 9.2px 12.0px rgba(0,0,0,0.28),0 0 8.6px 1px rgba(240,240,238,0.8);"></div>
<div class="b" style="left:1027.9px;top:532.3px;width:54.6px;height:53.6px;border-radius:50%;background:linear-gradient(180deg,#242424 0%,#1b1b1b 100%);"></div>
<div class="b" style="left:1053.8px;top:533.1px;width:2.6px;height:26.1px;background:linear-gradient(180deg,#e6e6e6,#c4c4c4);border-radius:1px;transform-origin:50% 100%;transform:rotate(-43deg);"></div>
<div class="b" style="left:1031.8px;top:587.9px;width:2.6px;height:2.6px;background:#9a9a9a;border-radius:2px;"></div>
<div class="b" style="left:1076.0px;top:587.9px;width:2.6px;height:2.6px;background:#9a9a9a;border-radius:2px;"></div>
<div class="b" style="left:1108.8px;top:513.5px;width:73.2px;height:29.9px;background:#e2e1df;border-radius:12px;"></div>
<div class="b" style="left:1110.8px;top:515.5px;width:69.2px;height:25.9px;background:#c4c3c2;border-radius:10px;"></div>
<span class="t" style="left:1118.6px;top:521.5px;font-size:14.5px;line-height:14.5px;font-weight:400;color:#1c1c1c;transform:scaleX(0.939);-webkit-text-stroke:0.2px #1c1c1c;">LEGATO</span>
<span class="t" style="left:1132.2px;top:549.8px;font-size:15.4px;line-height:15.4px;font-weight:400;color:#202020;transform:scaleX(0.838);-webkit-text-stroke:0.55px #202020;">VEL</span>
<div class="b" style="left:1119.9px;top:569.6px;width:47.8px;height:24.2px;background:#1c1c1c;border-radius:9px;"></div>
<span class="t" style="left:1134.9px;top:573.6px;font-size:16px;line-height:16px;font-weight:700;color:#f4f4f4;transform:scaleX(1.000);-webkit-text-stroke:0.2px #f4f4f4;">20</span>
<svg style="left:0;top:0" width="1214" height="934"><path d="M1013 616.500C1000 616.500 994 622 989 628C984 634 981 640 977 646C973 653 968 655 961 655L252 655C245 655 240 653 236 646C232 640 229 634 224 628C219 622 213 616.500 200 616.500Z" fill="#ecebe9"/><path d="M253.500 617.500H959.500a15.500 15.500 0 0 1 0 31H253.500a15.500 15.500 0 0 1 0-31z" fill="#121212"/></svg>
<div class="b" style="left:245.0px;top:621.4px;width:51.2px;height:24.4px;background:#101a1a;border-radius:11.5px;border:2.2px solid #19a4a2;"></div>
<span class="t" style="left:257.1px;top:624.2px;font-size:19px;line-height:19px;font-weight:700;color:#19a4a2;transform:scaleX(1.023);">KY</span>
<div class="b" style="left:301.1px;top:621.4px;width:51.2px;height:24.4px;background:#101a1a;border-radius:11.5px;border:2.2px solid #19a4a2;"></div>
<span class="t" style="left:313.6px;top:624.2px;font-size:19px;line-height:19px;font-weight:700;color:#19a4a2;transform:scaleX(1.087);">AT</span>
<div class="b" style="left:357.1px;top:621.4px;width:51.2px;height:24.4px;background:#101a1a;border-radius:11.5px;border:2.2px solid #19a4a2;"></div>
<span class="t" style="left:364.9px;top:624.2px;font-size:19px;line-height:19px;font-weight:700;color:#19a4a2;transform:scaleX(1.163);">PW</span>
<div class="b" style="left:413.1px;top:621.4px;width:51.2px;height:24.4px;background:#101a1a;border-radius:11.5px;border:2.2px solid #19a4a2;"></div>
<span class="t" style="left:420.9px;top:624.2px;font-size:19px;line-height:19px;font-weight:700;color:#19a4a2;transform:scaleX(1.054);">MW</span>
<div class="b" style="left:469.2px;top:621.4px;width:51.2px;height:24.4px;background:#101a1a;border-radius:11.5px;border:2.2px solid #19a4a2;"></div>
<span class="t" style="left:483.4px;top:624.2px;font-size:19px;line-height:19px;font-weight:700;color:#19a4a2;transform:scaleX(0.939);">VL</span>
<div class="b" style="left:525.2px;top:621.4px;width:51.2px;height:24.4px;background:#ecebe9;border-radius:11.5px;"></div>
<span class="t" style="left:538.0px;top:624.2px;font-size:19px;line-height:19px;font-weight:700;color:#a67cd5;transform:scaleX(0.977);">M1</span>
<div class="b" style="left:581.3px;top:621.4px;width:51.2px;height:24.4px;background:#a97cd6;border-radius:11.5px;"></div>
<span class="t" style="left:592.6px;top:624.2px;font-size:19px;line-height:19px;font-weight:700;color:#ffffff;transform:scaleX(1.080);">M2</span>
<div class="b" style="left:637.3px;top:621.4px;width:51.2px;height:24.4px;background:#a97cd6;border-radius:11.5px;"></div>
<span class="t" style="left:648.8px;top:624.2px;font-size:19px;line-height:19px;font-weight:700;color:#ffffff;transform:scaleX(1.068);">M3</span>
<div class="b" style="left:693.4px;top:621.4px;width:51.2px;height:24.4px;background:#a97cd6;border-radius:11.5px;"></div>
<span class="t" style="left:704.9px;top:624.2px;font-size:19px;line-height:19px;font-weight:700;color:#ffffff;transform:scaleX(1.068);">M4</span>
<div class="b" style="left:749.5px;top:621.4px;width:51.2px;height:24.4px;background:#c0247a;border-radius:11.5px;"></div>
<span class="t" style="left:764.4px;top:624.2px;font-size:19px;line-height:19px;font-weight:700;color:#ffffff;transform:scaleX(0.881);">A1</span>
<div class="b" style="left:805.5px;top:621.4px;width:51.2px;height:24.4px;background:#c0247a;border-radius:11.5px;"></div>
<span class="t" style="left:819.2px;top:624.2px;font-size:19px;line-height:19px;font-weight:700;color:#ffffff;transform:scaleX(0.976);">A2</span>
<div class="b" style="left:861.5px;top:621.4px;width:51.2px;height:24.4px;background:#c0247a;border-radius:11.5px;"></div>
<span class="t" style="left:875.0px;top:624.2px;font-size:19px;line-height:19px;font-weight:700;color:#ffffff;transform:scaleX(1.000);">A3</span>
<div class="b" style="left:917.6px;top:621.4px;width:51.2px;height:24.4px;background:#c0247a;border-radius:11.5px;"></div>
<span class="t" style="left:931.3px;top:624.2px;font-size:19px;line-height:19px;font-weight:700;color:#ffffff;transform:scaleX(0.976);">A4</span>
<div class="b" style="left:996.4px;top:623.7px;width:29.2px;height:29.2px;background:#2d2d2d;border-radius:15px;box-shadow:0 0 3px 1px #222;"></div>
<div class="b" style="left:1000.0px;top:627.3px;width:22.0px;height:22.0px;background:#f4f4f4;border-radius:11px;border:1.600px solid #111;"></div>
<svg style="left:0;top:0" width="1214" height="934"><path d="M1005.500 639.800h11l-5.500-7.500z" fill="#111"/></svg>
<div class="b" style="left:0.0px;top:617.0px;width:316.8px;height:44.0px;background:rgba(27,27,27,0.86);border-radius:0px;"></div>
<span class="t" style="left:15.0px;top:630.8px;font-size:17.6px;line-height:17.6px;font-weight:400;color:#f2f2f2;transform:scaleX(0.947);">WA Emilia VocalChop 04 75BPM Ebmaj</span>
<span class="t" style="left:78.8px;top:717.9px;font-size:31px;line-height:31px;font-weight:700;color:#a9a9a9;transform:scaleX(0.804);-webkit-text-stroke:0.5px #a9a9a9;">MOD 1</span>
<div class="b" style="left:404.4px;top:684.2px;width:77.2px;height:23.4px;background:#1d1d1d;border-radius:0px;"></div>
<div class="b" style="left:483.0px;top:684.4px;width:72.8px;height:23.0px;background:#6a2f9f;border-radius:3px;"></div>
<span class="t" style="left:425.3px;top:688.1px;font-size:17px;line-height:17px;font-weight:700;color:#646464;transform:scaleX(0.894);-webkit-text-stroke:0.3px #646464;">LFO</span>
<span class="t" style="left:502.0px;top:688.1px;font-size:17px;line-height:17px;font-weight:700;color:#ffffff;transform:scaleX(0.947);">SEQ</span>
<span class="t" style="left:564.9px;top:688.5px;font-size:17px;line-height:17px;font-weight:700;color:#c4c4c4;transform:scaleX(0.786);-webkit-text-stroke:0.4px #c4c4c4;">TRIGGER</span>
<div class="b" style="left:635.4px;top:684.2px;width:102.0px;height:22.6px;background:#090909;border-radius:0px;"></div>
<span class="t" style="left:640.0px;top:687.4px;font-size:16.5px;line-height:16.5px;font-weight:700;color:#f2f2f2;transform:scaleX(1.008);">Legato</span>
<svg style="left:0;top:0" width="1214" height="934"><path d="M722.600 691.600h8.200l-4.100 6z" fill="#f2f2f2"/></svg>
<div class="b" style="left:339.6px;top:716.0px;width:58.0px;height:159.5px;background:#202122;border-radius:0px;"></div>
<svg style="left:0;top:0" width="1214" height="934"><g transform="translate(369 742.600) rotate(30)"><rect x="-4" y="-12" width="8" height="4.500" rx="2" fill="#8c8c8c"/><rect x="-4" y="-6.500" width="8" height="13" fill="#8c8c8c"/><path d="M-4 7.500h8l-4 6.500z" fill="#8c8c8c"/></g><g transform="translate(369 794.700) rotate(30)"><rect x="-5" y="-11" width="10" height="22" rx="2.500" fill="#8c8c8c"/><rect x="-3.200" y="3.200" width="6.400" height="6" rx="1" fill="#202122"/></g><path d="M359 842.500a1.500 1.500 0 0 1 1.500-1.500h7l2 2.500h12a1.500 1.500 0 0 1 1.500 1.500v13.500h-24z" fill="#8c8c8c"/></svg>
<div class="b" style="left:404.4px;top:716.0px;width:333.6px;height:159.5px;background:#222222;border-radius:0px;box-shadow:0 0 0 1px #2b2b2b;"></div>
<div class="b" style="left:424.1px;top:716.0px;width:2.2px;height:159.5px;background:#0c0c0c;border-radius:0px;"></div>
<div class="b" style="left:445.0px;top:716.0px;width:2.2px;height:159.5px;background:#0c0c0c;border-radius:0px;"></div>
<div class="b" style="left:465.8px;top:716.0px;width:2.2px;height:159.5px;background:#0c0c0c;border-radius:0px;"></div>
<div class="b" style="left:486.7px;top:716.0px;width:2.2px;height:159.5px;background:#0c0c0c;border-radius:0px;"></div>
<div class="b" style="left:507.5px;top:716.0px;width:2.2px;height:159.5px;background:#0c0c0c;border-radius:0px;"></div>
<div class="b" style="left:528.4px;top:716.0px;width:2.2px;height:159.5px;background:#0c0c0c;border-radius:0px;"></div>
<div class="b" style="left:549.2px;top:716.0px;width:2.2px;height:159.5px;background:#0c0c0c;border-radius:0px;"></div>
<div class="b" style="left:570.1px;top:716.0px;width:2.2px;height:159.5px;background:#0c0c0c;border-radius:0px;"></div>
<div class="b" style="left:590.9px;top:716.0px;width:2.2px;height:159.5px;background:#0c0c0c;border-radius:0px;"></div>
<div class="b" style="left:611.8px;top:716.0px;width:2.2px;height:159.5px;background:#0c0c0c;border-radius:0px;"></div>
<div class="b" style="left:632.6px;top:716.0px;width:2.2px;height:159.5px;background:#0c0c0c;border-radius:0px;"></div>
<div class="b" style="left:653.5px;top:716.0px;width:2.2px;height:159.5px;background:#0c0c0c;border-radius:0px;"></div>
<div class="b" style="left:674.4px;top:716.0px;width:2.2px;height:159.5px;background:#0c0c0c;border-radius:0px;"></div>
<div class="b" style="left:695.2px;top:716.0px;width:2.2px;height:159.5px;background:#0c0c0c;border-radius:0px;"></div>
<div class="b" style="left:716.0px;top:716.0px;width:2.2px;height:159.5px;background:#0c0c0c;border-radius:0px;"></div>
<div class="b" style="left:404.4px;top:796.0px;width:333.6px;height:1.0px;background:#303030;border-radius:0px;"></div>
<svg style="left:0;top:0" width="1214" height="934"><defs><linearGradient id="gu" x1="0" y1="0" x2="0" y2="1"><stop offset="0" stop-color="#6a3a9a" stop-opacity="0.55"/><stop offset="1" stop-color="#3b2058" stop-opacity="0.45"/></linearGradient><linearGradient id="gd" x1="0" y1="1" x2="0" y2="0"><stop offset="0" stop-color="#6a3a9a" stop-opacity="0.55"/><stop offset="1" stop-color="#3b2058" stop-opacity="0.45"/></linearGradient></defs><rect x="466.9" y="796.5" width="20.9" height="78.2" fill="url(#gd)"/><rect x="487.8" y="796.5" width="20.9" height="23.0" fill="url(#gd)"/><rect x="508.6" y="754.0" width="20.9" height="42.5" fill="url(#gu)"/><rect x="529.5" y="754.0" width="20.9" height="42.5" fill="url(#gu)"/><rect x="550.4" y="783.4" width="20.9" height="13.1" fill="url(#gu)"/><rect x="571.2" y="796.5" width="20.9" height="46.0" fill="url(#gd)"/><rect x="592.0" y="793.3" width="20.9" height="3.2" fill="url(#gu)"/><rect x="612.9" y="763.9" width="20.9" height="32.6" fill="url(#gu)"/><rect x="633.8" y="750.8" width="20.9" height="45.7" fill="url(#gu)"/><rect x="654.6" y="750.8" width="20.9" height="45.7" fill="url(#gu)"/><rect x="675.5" y="754.0" width="20.9" height="42.5" fill="url(#gu)"/><rect x="696.3" y="723.8" width="20.9" height="72.7" fill="url(#gu)"/><rect x="717.1" y="796.5" width="20.9" height="23.0" fill="url(#gd)"/><path d="M404.4 796.5L425.2 796.5L425.2 796.5L446.1 796.5L446.1 796.5L466.9 796.5L466.9 874.7L487.8 874.7L487.8 819.5L508.6 819.5L508.6 754.0L529.5 754.0L529.5 754.0L550.4 754.0L550.4 783.4L571.2 783.4L571.2 842.5L592.1 842.5L592.0 793.3L612.9 793.3L612.9 763.9L633.8 763.9L633.8 750.8L654.6 750.8L654.6 750.8L675.5 750.8L675.5 754.0L696.3 754.0L696.3 723.8L717.1 723.8L717.1 819.5L738.0 819.5" fill="none" stroke="#9c5ad1" stroke-width="1.300"/><path d="M405.0 796.5H424.6" stroke="#9c5ad1" stroke-width="3.200"/><path d="M425.9 796.5H445.5" stroke="#9c5ad1" stroke-width="3.200"/><path d="M446.7 796.5H466.3" stroke="#9c5ad1" stroke-width="3.200"/><path d="M467.6 874.7H487.2" stroke="#9c5ad1" stroke-width="3.200"/><path d="M488.4 819.5H508.0" stroke="#9c5ad1" stroke-width="3.200"/><path d="M509.2 754.0H528.9" stroke="#9c5ad1" stroke-width="3.200"/><path d="M530.1 754.0H549.8" stroke="#9c5ad1" stroke-width="3.200"/><path d="M551.0 783.4H570.6" stroke="#9c5ad1" stroke-width="3.200"/><path d="M571.8 842.5H591.5" stroke="#9c5ad1" stroke-width="3.200"/><path d="M592.6 793.3H612.3" stroke="#9c5ad1" stroke-width="3.200"/><path d="M613.5 763.9H633.1" stroke="#9c5ad1" stroke-width="3.200"/><path d="M634.4 750.8H654.0" stroke="#9c5ad1" stroke-width="3.200"/><path d="M655.2 750.8H674.9" stroke="#9c5ad1" stroke-width="3.200"/><path d="M676.1 754.0H695.7" stroke="#9c5ad1" stroke-width="3.200"/><path d="M696.9 723.8H716.5" stroke="#9c5ad1" stroke-width="3.200"/><path d="M717.8 819.5H737.4" stroke="#9c5ad1" stroke-width="3.200"/></svg>
<div class="b" style="left:404.2px;top:716.0px;width:1.5px;height:159.5px;background:#f0f0f0;border-radius:0px;"></div>
<span class="t" style="left:741.5px;top:713.3px;font-size:14px;line-height:14px;font-weight:400;color:#565656;transform:scaleX(0.963);">24</span>
<span class="t" style="left:742.0px;top:788.8px;font-size:14px;line-height:14px;font-weight:400;color:#565656;transform:scaleX(0.963);">0</span>
<span class="t" style="left:740.5px;top:864.2px;font-size:14px;line-height:14px;font-weight:400;color:#565656;transform:scaleX(1.030);letter-spacing:0.08px;">-24</span>
<div class="b" style="left:727.5px;top:755.5px;width:9.9px;height:1.2px;background:#555;border-radius:0px;"></div>
<div class="b" style="left:727.5px;top:831.7px;width:9.9px;height:1.2px;background:#555;border-radius:0px;"></div>
<span class="t" style="left:405.5px;top:888.8px;font-size:14.5px;line-height:14.5px;font-weight:700;color:#999999;transform:scaleX(0.831);-webkit-text-stroke:0.3px #999999;">STEPS</span>
<span class="t" style="left:461.8px;top:886.5px;font-size:17px;line-height:17px;font-weight:700;color:#dddddd;transform:scaleX(0.899);">16</span>
<span class="t" style="left:549.6px;top:887.5px;font-size:17px;line-height:17px;font-weight:700;color:#c4c4c4;transform:scaleX(0.800);-webkit-text-stroke:0.4px #c4c4c4;">MODE</span>
<div class="b" style="left:597.4px;top:884.3px;width:138.2px;height:23.0px;background:#090909;border-radius:0px;"></div>
<svg style="left:0;top:0" width="1214" height="934" fill="none" stroke-linecap="round" stroke-linejoin="round"><path d="M607.500 896h14M616.500 891l5.500 5-5.500 5" stroke="#cacaca" stroke-width="2.200"/><path d="M640.500 897.500v-1.500a4.500 4.500 0 0 1 4.500-4.500h12.500M654.500 888.500l3.500 3-3.500 3M661 894.500v1.500a4.500 4.500 0 0 1-4.500 4.500h-12.500M647 903.500l-3.500-3 3.500-3" stroke="#9c5ad1" stroke-width="2.300"/><path d="M679.500 892h17M692.500 888l4.500 4-4.500 4M697.500 900h-17M684.500 904l-4.500-4 4.500-4" stroke="#cacaca" stroke-width="2.200"/><path d="M721.200 889.500v13M727.200 889.500v13" stroke="#e8e8e8" stroke-width="2.200" stroke-linecap="butt"/></svg>
<span class="t" style="left:809.7px;top:686.9px;font-size:17px;line-height:17px;font-weight:700;color:#bcbcbc;transform:scaleX(0.824);-webkit-text-stroke:0.3px #bcbcbc;">RATE</span>
<svg style="left:0;top:0" width="1214" height="934"><path d="M803.4 771.2A36.1 36.1 0 1 1 852.6 771.2" stroke="#3a3a3a" stroke-width="3.900" fill="none"/></svg>
<div class="b" style="left:797.4px;top:714.2px;width:61.2px;height:61.2px;border-radius:50%;background:#0f0f0f;box-shadow:0 10px 14px rgba(0,0,0,0.45);"></div>
<div class="b" style="left:799.4px;top:716.2px;width:57.2px;height:57.2px;border-radius:50%;background:linear-gradient(180deg,#3c3c3c 0%,#2a2a2a 30%,#1e1e1e 100%);"></div>
<div class="b" style="left:801.2px;top:718.0px;width:53.6px;height:53.6px;border-radius:50%;background:linear-gradient(180deg,#1d1d1d 0%,#161616 100%);"></div>
<div class="b" style="left:826.6px;top:719.2px;width:2.800px;height:25.6px;background:#cecece;border-radius:1px;transform-origin:50% 100%;transform:rotate(20deg);"></div>
<span class="t" style="left:958.7px;top:686.9px;font-size:17px;line-height:17px;font-weight:700;color:#bcbcbc;transform:scaleX(0.790);-webkit-text-stroke:0.3px #bcbcbc;">WARP</span>
<svg style="left:0;top:0" width="1214" height="934"><path d="M954.2 771.2A36.1 36.1 0 1 1 1003.4 771.2" stroke="#3a3a3a" stroke-width="3.900" fill="none"/></svg>
<div class="b" style="left:948.2px;top:714.2px;width:61.2px;height:61.2px;border-radius:50%;background:#0f0f0f;box-shadow:0 10px 14px rgba(0,0,0,0.45);"></div>
<div class="b" style="left:950.2px;top:716.2px;width:57.2px;height:57.2px;border-radius:50%;background:linear-gradient(180deg,#3c3c3c 0%,#2a2a2a 30%,#1e1e1e 100%);"></div>
<div class="b" style="left:952.0px;top:718.0px;width:53.6px;height:53.6px;border-radius:50%;background:linear-gradient(180deg,#1d1d1d 0%,#161616 100%);"></div>
<div class="b" style="left:977.4px;top:719.2px;width:2.800px;height:25.6px;background:#cecece;border-radius:1px;transform-origin:50% 100%;transform:rotate(0deg);"></div>
<span class="t" style="left:803.5px;top:800.6px;font-size:17px;line-height:17px;font-weight:700;color:#bcbcbc;transform:scaleX(0.819);-webkit-text-stroke:0.3px #bcbcbc;">PHASE</span>
<svg style="left:0;top:0" width="1214" height="934"><path d="M803.4 885.3A36.1 36.1 0 1 1 852.6 885.3" stroke="#3a3a3a" stroke-width="3.900" fill="none"/></svg>
<div class="b" style="left:797.4px;top:828.3px;width:61.2px;height:61.2px;border-radius:50%;background:#0f0f0f;box-shadow:0 10px 14px rgba(0,0,0,0.45);"></div>
<div class="b" style="left:799.4px;top:830.3px;width:57.2px;height:57.2px;border-radius:50%;background:linear-gradient(180deg,#3c3c3c 0%,#2a2a2a 30%,#1e1e1e 100%);"></div>
<div class="b" style="left:801.2px;top:832.1px;width:53.6px;height:53.6px;border-radius:50%;background:linear-gradient(180deg,#1d1d1d 0%,#161616 100%);"></div>
<div class="b" style="left:826.6px;top:833.3px;width:2.800px;height:25.6px;background:#cecece;border-radius:1px;transform-origin:50% 100%;transform:rotate(-143deg);"></div>
<span class="t" style="left:948.7px;top:800.6px;font-size:17px;line-height:17px;font-weight:700;color:#bcbcbc;transform:scaleX(0.828);-webkit-text-stroke:0.3px #bcbcbc;">SMOOTH</span>
<svg style="left:0;top:0" width="1214" height="934"><path d="M954.2 885.3A36.1 36.1 0 1 1 1003.4 885.3" stroke="#3a3a3a" stroke-width="3.900" fill="none"/></svg>
<div class="b" style="left:948.2px;top:828.3px;width:61.2px;height:61.2px;border-radius:50%;background:#0f0f0f;box-shadow:0 10px 14px rgba(0,0,0,0.45);"></div>
<div class="b" style="left:950.2px;top:830.3px;width:57.2px;height:57.2px;border-radius:50%;background:linear-gradient(180deg,#3c3c3c 0%,#2a2a2a 30%,#1e1e1e 100%);"></div>
<div class="b" style="left:952.0px;top:832.1px;width:53.6px;height:53.6px;border-radius:50%;background:linear-gradient(180deg,#1d1d1d 0%,#161616 100%);"></div>
<div class="b" style="left:977.4px;top:833.3px;width:2.800px;height:25.6px;background:#cecece;border-radius:1px;transform-origin:50% 100%;transform:rotate(-143deg);"></div>
<span class="t" style="left:1113.4px;top:746.8px;font-size:17px;line-height:17px;font-weight:700;color:#bcbcbc;transform:scaleX(0.787);-webkit-text-stroke:0.3px #bcbcbc;">LEVEL</span>
<svg style="left:0;top:0" width="1214" height="934"><path d="M1110.1 832.2A36.1 36.1 0 1 1 1159.3 832.2" stroke="#3a3a3a" stroke-width="3.900" fill="none"/></svg>
<div class="b" style="left:1104.1px;top:775.2px;width:61.2px;height:61.2px;border-radius:50%;background:#0f0f0f;box-shadow:0 10px 14px rgba(0,0,0,0.45);"></div>
<div class="b" style="left:1106.1px;top:777.2px;width:57.2px;height:57.2px;border-radius:50%;background:linear-gradient(180deg,#3c3c3c 0%,#2a2a2a 30%,#1e1e1e 100%);"></div>
<div class="b" style="left:1107.9px;top:779.0px;width:53.6px;height:53.6px;border-radius:50%;background:linear-gradient(180deg,#1d1d1d 0%,#161616 100%);"></div>
<div class="b" style="left:1133.3px;top:780.2px;width:2.800px;height:25.6px;background:#cecece;border-radius:1px;transform-origin:50% 100%;transform:rotate(143deg);"></div>
<svg style="left:0;top:0" width="1214" height="934"><path d="M882.200 714.500V703l10.200-2.200v11.500" stroke="#f4f4f4" stroke-width="1.800" fill="none"/><path d="M882.200 706.200l10.200-2.200" stroke="#f4f4f4" stroke-width="3.400"/><ellipse cx="879.700" cy="714.700" rx="3" ry="2.500" fill="#f4f4f4"/><ellipse cx="889.900" cy="712.500" rx="3" ry="2.500" fill="#f4f4f4"/></svg>
</body></html>
